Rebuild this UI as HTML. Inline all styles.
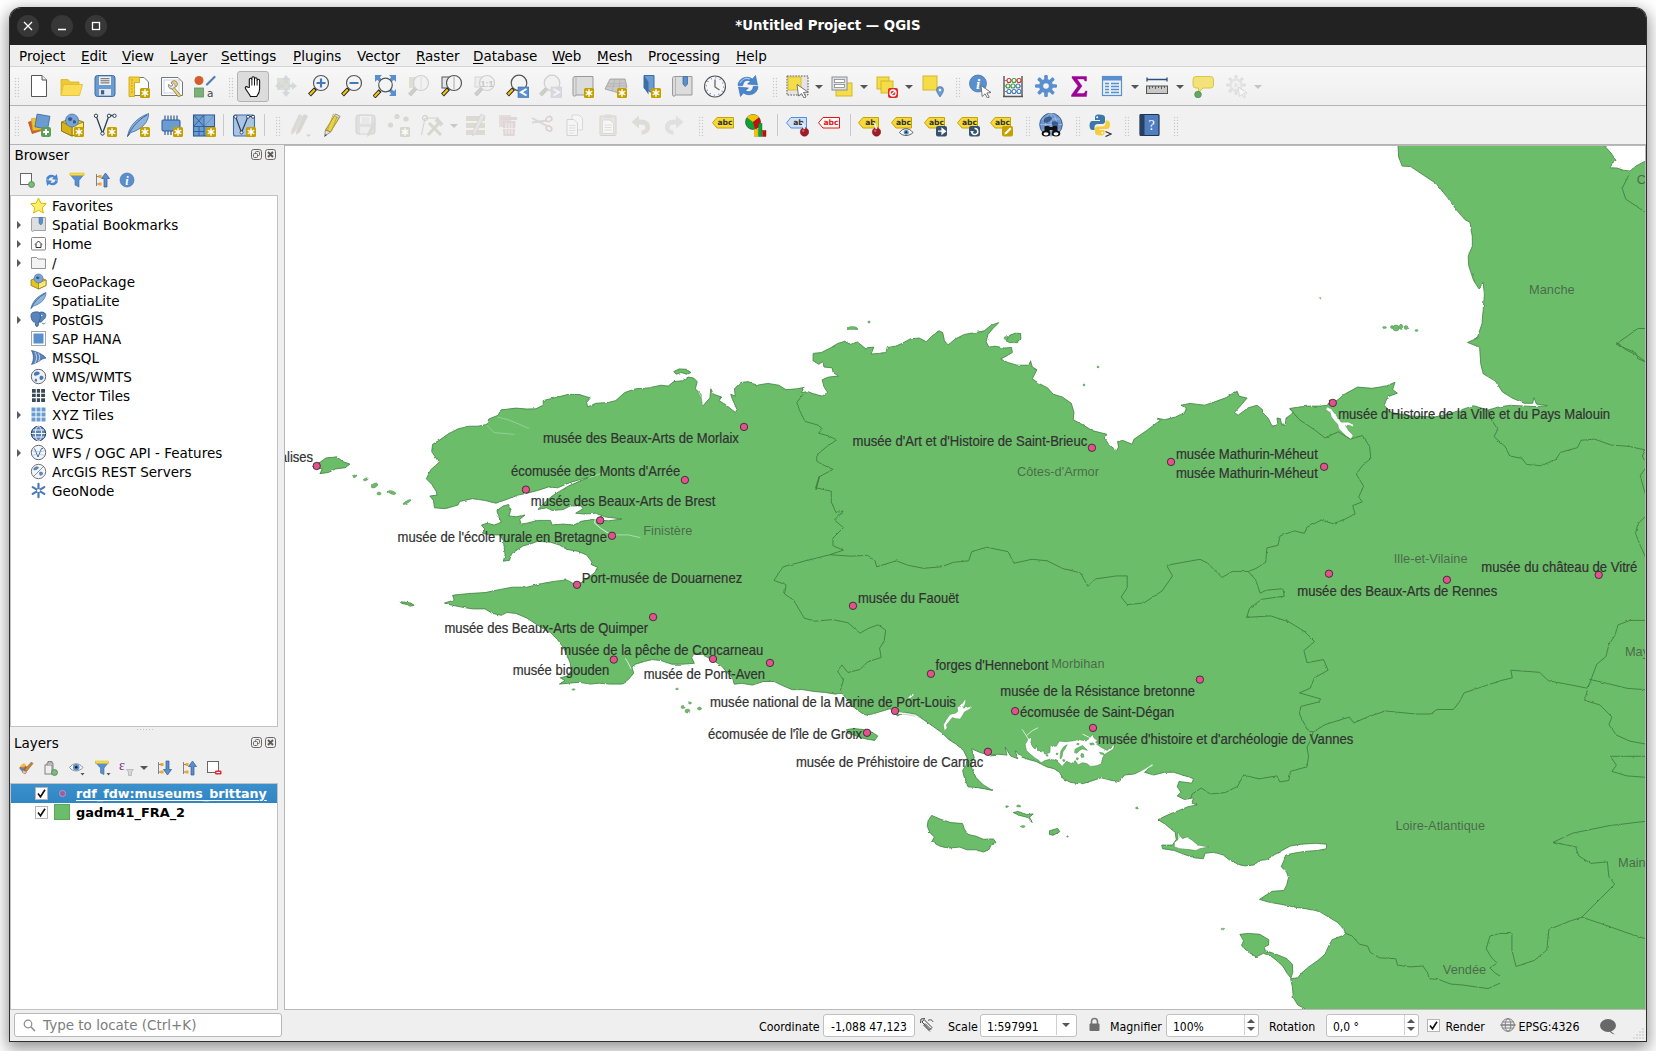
<!DOCTYPE html>
<html lang="en">
<head>
<meta charset="utf-8">
<title>*Untitled Project — QGIS</title>
<style>
html,body{margin:0;padding:0;}
body{width:1656px;height:1051px;overflow:hidden;background:#fff;position:relative;
 font-family:"DejaVu Sans","Liberation Sans",sans-serif;font-size:13.5px;color:#000;}
*{box-sizing:border-box;}
.abs{position:absolute;}
#shadow{position:absolute;left:9px;top:7px;width:1638px;height:1035px;border-radius:12px 12px 0 0;
 box-shadow:0 5px 16px 2px rgba(0,0,0,.42);}
#win{position:absolute;left:9px;top:7px;width:1638px;height:1035px;border-radius:12px 12px 0 0;
 background:#efefef;overflow:hidden;border:1px solid #2e2e2e;border-top-color:#222;}
#title{position:absolute;left:0;top:0;width:1636px;height:37px;background:#222222;}
#title .t{position:absolute;left:0;width:1636px;top:9px;text-align:center;color:#fff;font-weight:bold;font-size:13.35px;line-height:17px;}
.wb{position:absolute;top:7px;width:22px;height:22px;border-radius:50%;background:#373737;}
#menu{position:absolute;left:0;top:37px;width:1636px;height:22px;background:#efefef;border-bottom:1px solid #d4d4d4;}
#menu span{position:absolute;top:3px;line-height:17px;white-space:nowrap;}
#menu u{text-decoration:underline;text-underline-offset:2px;}
.tb{position:absolute;left:0;width:1636px;height:39px;background:linear-gradient(#f7f7f7,#efefef);border-bottom:1px solid #b4b4b4;}
.ic{position:absolute;width:24px;height:24px;}
.grip{position:absolute;width:6px;height:21px;background-image:radial-gradient(circle,#c8c8c8 0.6px,transparent 1.05px);background-size:3px 3px;}
.sep{position:absolute;width:1px;height:22px;background:#c8c8c8;}
.dd{position:absolute;width:0;height:0;border-left:4px solid transparent;border-right:4px solid transparent;border-top:4px solid #555;}
.dock-title{position:absolute;left:5px;font-size:13.5px;line-height:18px;}
.tree{position:absolute;background:#fff;border:1px solid #c2c2c2;}
.row{position:absolute;left:0;height:19px;line-height:19px;white-space:nowrap;}
.row .lbl{position:absolute;left:41px;top:0;}
.arrow{position:absolute;left:6px;top:5px;width:0;height:0;border-top:4px solid transparent;border-bottom:4px solid transparent;border-left:4.5px solid #5a5a5a;}
.bi{position:absolute;left:18.5px;top:0px;width:17px;height:17px;}
.fld{position:absolute;background:#fff;border:1px solid #c0c0c0;border-radius:3px;height:23px;padding-top:1px;line-height:22px;font-family:"DejaVu Sans Condensed","DejaVu Sans","Liberation Sans",sans-serif;font-stretch:condensed;font-size:12px;padding-left:6px;white-space:nowrap;}
.sl{position:absolute;font-family:"DejaVu Sans Condensed","DejaVu Sans","Liberation Sans",sans-serif;font-stretch:condensed;font-size:12.3px;line-height:16px;white-space:nowrap;}
</style>
</head>
<body>
<div id="shadow"></div>
<div id="win">
<div id="title">
 <div class="wb" style="left:7px"><svg width="22" height="22"><path d="M7 7L15 15M15 7L7 15" stroke="#fff" stroke-width="1.3" fill="none"/></svg></div>
 <div class="wb" style="left:41px"><svg width="22" height="22"><path d="M7 14.5H15" stroke="#fff" stroke-width="1.3" fill="none"/></svg></div>
 <div class="wb" style="left:75px"><svg width="22" height="22"><rect x="7.5" y="7.5" width="7" height="7" stroke="#fff" stroke-width="1.3" fill="none"/></svg></div>
 <div class="t">*Untitled Project — QGIS</div>
</div>
<div id="menu">
 <span style="left:9px">Pro<u>j</u>ect</span>
 <span style="left:71px"><u>E</u>dit</span>
 <span style="left:112px"><u>V</u>iew</span>
 <span style="left:160px"><u>L</u>ayer</span>
 <span style="left:211px"><u>S</u>ettings</span>
 <span style="left:283px"><u>P</u>lugins</span>
 <span style="left:347px">Vect<u>o</u>r</span>
 <span style="left:406px"><u>R</u>aster</span>
 <span style="left:463px"><u>D</u>atabase</span>
 <span style="left:542px"><u>W</u>eb</span>
 <span style="left:587px"><u>M</u>esh</span>
 <span style="left:638px">Pro<u>c</u>essing</span>
 <span style="left:726px"><u>H</u>elp</span>
</div>
<div class="tb" style="top:59px">
<div class="grip" style="left:4px;top:10px"></div>
<svg class="ic" style="left:17px;top:7px" viewBox="0 0 24 24"><path d="M4.5 1.5H15L19.5 6V22.5H4.5Z" fill="#fff" stroke="#555" stroke-width="1"/><path d="M15 1.5V6H19.5" fill="#eee" stroke="#555" stroke-width="1"/></svg>
<svg class="ic" style="left:49px;top:7px" viewBox="0 0 24 24"><path d="M2 5.5H9L11 8H20V21H2Z" fill="#edc933" stroke="#d9b420" stroke-width="0.8"/><path d="M4.5 10.5H23.5L20.5 21.5H2Z" fill="#fbdc57" stroke="#e0bd30" stroke-width="0.8"/></svg>
<svg class="ic" style="left:83px;top:7px" viewBox="0 0 24 24"><rect x="2" y="1.5" width="20" height="21" rx="2.5" fill="#6a9bd1" stroke="#3d6da3" stroke-width="1"/><rect x="6" y="2.5" width="12" height="8.5" fill="#f2f2f2"/><path d="M7.5 4.7H16.5M7.5 6.8H16.5M7.5 8.9H16.5" stroke="#555" stroke-width="0.9"/><rect x="6" y="15" width="12" height="6.5" fill="#e4e9f0"/><rect x="8" y="16.2" width="3.2" height="4.2" fill="#3d5f8f"/></svg>
<svg class="ic" style="left:116px;top:7px" viewBox="0 0 24 24"><path d="M3.5 3.5H18L22.500 8V21.5H3.5Z" fill="#fff" stroke="#777" stroke-width="1"/><path d="M3 3H13.5V8.500H8.500V22.500H3Z" fill="#f3cf3d" stroke="#c9a400" stroke-width="0.8"/><path d="M5 6H7M5 9H6.5M5 12H7M5 15H6.5M5 18H7" stroke="#a88600" stroke-width="0.7"/><rect x="14" y="14" width="10" height="10" rx="1.5" fill="#c4a000"/><g stroke="#fff" stroke-width="1.4" stroke-linecap="round"><path d="M19 15.8V22.2M16.2 17.4L21.8 20.6M21.8 17.4L16.2 20.6"/></g></svg>
<svg class="ic" style="left:149px;top:7px" viewBox="0 0 24 24"><path d="M2.5 3.5H19L23.500 8V21.5H2.5Z" fill="#fff" stroke="#777" stroke-width="1"/><rect x="5" y="6" width="15" height="13" fill="none" stroke="#b9c5ea" stroke-width="0.8"/><path d="M12 9a3.300 3.300 0 1 1 3 4.300L22 21.500L19.500 23L13 15a3.500 3.500 0 0 1-3.500-4.500L12 12.500L14 11Z" fill="#e9d08a" stroke="#8d7a3a" stroke-width="0.8"/><path d="M12 9a3.300 3.300 0 0 1 4.200 4L13.500 14.500a3.500 3.500 0 0 1-4-4L12 12.500L14 11Z" fill="#e8e8e8" stroke="#888" stroke-width="0.7"/></svg>
<svg class="ic" style="left:182px;top:7px" viewBox="0 0 24 24"><circle cx="7" cy="6.5" r="4.5" fill="#d35e2f"/><rect x="2.500" y="14" width="9" height="9" fill="#7bb07b" stroke="#5d945d" stroke-width="0.8"/><path d="M15 10.500L22.500 3" stroke="#4d7fb8" stroke-width="2.200" stroke-linecap="round"/><text x="15" y="22.500" font-family="DejaVu Sans,Liberation Sans,sans-serif" font-size="10.500" fill="#444">a</text></svg>
<div class="grip" style="left:218px;top:10px"></div>
<div class="abs" style="left:227px;top:4px;width:32px;height:31px;border:1px solid #b3b3b3;border-radius:3px;background:#dcdcdc"></div>
<svg class="ic" style="left:231px;top:7px" viewBox="0 0 24 24"><path d="M8.300 13.500V5.500a1.300 1.300 0 0 1 2.600 0V4a1.300 1.300 0 0 1 2.600 0V5a1.300 1.300 0 0 1 2.600 0V6.500a1.250 1.250 0 0 1 2.500 0V15c0 4-2 6-3 7.500H9.500C8.500 20 6 17.500 4.500 14.500c-.8-1.600 1-2.600 2.200-1.300Z" fill="#fff" stroke="#111" stroke-width="1.100" stroke-linejoin="round"/><path d="M10.900 5.500V11.500M13.500 5V11.500M16.100 6.500V11.500" stroke="#111" stroke-width="1"/></svg>
<svg class="ic" style="left:264px;top:7px" viewBox="0 0 24 24"><rect x="3" y="4" width="13" height="12" fill="#deded2"/><g fill="#d3d8dc"><path d="M12 1L16 6H13.500V10H10.500V6H8Z"/><path d="M12 23L16 18H13.500V14H10.500V18H8Z"/><path d="M1 12L6 8V10.500H10V13.500H6V16Z"/><path d="M23 12L18 8V10.500H14V13.500H18V16Z"/></g></svg>
<svg class="ic" style="left:297px;top:7px" viewBox="0 0 24 24"><path d="M8.6 14.6L2.5 21" stroke="#222" stroke-width="4" stroke-linecap="butt"/><path d="M7.7 15.5L3 20.5" stroke="#f3c614" stroke-width="2.2"/><circle cx="14" cy="9" r="7.5" fill="#f4f4f4" stroke="#555" stroke-width="1.2"/><path d="M9.500 9H18.500M14 4.500V13.500" stroke="#4178be" stroke-width="2.200"/></svg>
<svg class="ic" style="left:330px;top:7px" viewBox="0 0 24 24"><path d="M8.6 14.6L2.5 21" stroke="#222" stroke-width="4" stroke-linecap="butt"/><path d="M7.7 15.5L3 20.5" stroke="#f3c614" stroke-width="2.2"/><circle cx="14" cy="9" r="7.5" fill="#f4f4f4" stroke="#555" stroke-width="1.2"/><path d="M9.500 9H18.500" stroke="#4178be" stroke-width="2.200"/></svg>
<svg class="ic" style="left:363px;top:7px" viewBox="0 0 24 24"><g fill="#5a8fce"><path d="M2 1H9L6.800 3.200L10 6.500L7.500 9L4.200 5.800L2 8Z"/><path d="M23 1V8L20.800 5.800L17.500 9L15 6.500L18.200 3.200L16 1Z"/><path d="M23 22H16L18.200 19.800L15 16.500L17.500 14L20.800 17.200L23 15Z"/></g><path d="M7.1 16.6L1.0 23" stroke="#222" stroke-width="4" stroke-linecap="butt"/><path d="M6.2 17.5L1.5 22.5" stroke="#f3c614" stroke-width="2.2"/><circle cx="12.5" cy="11" r="6.8" fill="#f4f4f4" stroke="#555" stroke-width="1.2"/></svg>
<svg class="ic" style="left:396px;top:7px" viewBox="0 0 24 24"><rect x="3" y="3" width="11" height="11" fill="#deded2"/><path d="M9.6 14.6L3.5 21" stroke="#c8c8c8" stroke-width="4" stroke-linecap="butt"/><path d="M8.7 15.5L4 20.5" stroke="#cfcfc4" stroke-width="2.2"/><circle cx="15" cy="9" r="7.5" fill="#f1f1f1" stroke="#cfcfcf" stroke-width="1.2"/><path d="M15 3V15" stroke="#dcdcdc" stroke-width="1"/></svg>
<svg class="ic" style="left:429px;top:7px" viewBox="0 0 24 24"><rect x="3" y="3" width="11" height="11" fill="#e4e4e4" stroke="#555" stroke-width="1"/><path d="M9.6 14.6L3.5 21" stroke="#222" stroke-width="4" stroke-linecap="butt"/><path d="M8.7 15.5L4 20.5" stroke="#f3c614" stroke-width="2.2"/><circle cx="15" cy="9" r="7.5" fill="#f4f4f4" stroke="#555" stroke-width="1.2"/><path d="M15 2.500V15.500" stroke="#aaa" stroke-width="1"/></svg>
<svg class="ic" style="left:462px;top:7px" viewBox="0 0 24 24"><rect x="3" y="3" width="10" height="10" fill="#ededed" stroke="#d5d5d5"/><path d="M9.6 14.6L3.5 21" stroke="#c8c8c8" stroke-width="4" stroke-linecap="butt"/><path d="M8.7 15.5L4 20.5" stroke="#cfcfc4" stroke-width="2.2"/><circle cx="15" cy="9" r="7.5" fill="#f1f1f1" stroke="#cfcfcf" stroke-width="1.2"/><text x="15" y="12.500" text-anchor="middle" font-family="Liberation Sans,sans-serif" font-weight="bold" font-size="9" fill="#c6c6c6">1:1</text></svg>
<svg class="ic" style="left:495px;top:7px" viewBox="0 0 24 24"><path d="M8.6 14.6L2.5 21" stroke="#222" stroke-width="4" stroke-linecap="butt"/><path d="M7.7 15.5L3 20.5" stroke="#f3c614" stroke-width="2.2"/><circle cx="14" cy="9" r="7.8" fill="#f4f4f4" stroke="#555" stroke-width="1.2"/><rect x="13" y="13" width="11" height="10.500" fill="#5a8fce" stroke="#3d6da3" stroke-width="0.600"/><path d="M21.500 15L16 18.200L21.500 21.500" stroke="#fff" stroke-width="2" fill="none"/></svg>
<svg class="ic" style="left:528px;top:7px" viewBox="0 0 24 24"><path d="M8.6 14.6L2.5 21" stroke="#c8c8c8" stroke-width="4" stroke-linecap="butt"/><path d="M7.7 15.5L3 20.5" stroke="#cfcfc4" stroke-width="2.2"/><circle cx="14" cy="9" r="7.8" fill="#f1f1f1" stroke="#cfcfcf" stroke-width="1.2"/><rect x="13" y="13" width="11" height="10.500" fill="#d6dade" stroke="#cfd3d6" stroke-width="0.600"/><path d="M15.500 15L21 18.200L15.500 21.500" stroke="#f4f4f4" stroke-width="2" fill="none"/></svg>
<svg class="ic" style="left:561px;top:7px" viewBox="0 0 24 24"><path d="M4 2.500C2.500 2.500 2 3.500 2 4.500V21c0 1.500 3 1.500 3 0H22V2.500Z" fill="#dcdcdc" stroke="#999" stroke-width="1"/><path d="M5 2.500V21" stroke="#aaa" stroke-width="0.800"/><rect x="13" y="14" width="10" height="10" rx="1.5" fill="#c4a000"/><g stroke="#fff" stroke-width="1.4" stroke-linecap="round"><path d="M18 15.8V22.2M15.2 17.4L20.8 20.6M20.8 17.4L15.2 20.6"/></g></svg>
<svg class="ic" style="left:594px;top:7px" viewBox="0 0 24 24"><path d="M6 5H21L23 13L15 19L1 15Z" fill="#c9c9c9" stroke="#9a9a9a" stroke-width="0.800"/><path d="M4 10L22 9M3 12.500L22.500 11.500M11 5L8 17M16 5L15 18" stroke="#aaa" stroke-width="0.600"/><rect x="13" y="14" width="10" height="10" rx="1.5" fill="#c4a000"/><g stroke="#fff" stroke-width="1.4" stroke-linecap="round"><path d="M18 15.8V22.2M15.2 17.4L20.8 20.6M20.8 17.4L15.2 20.6"/></g></svg>
<svg class="ic" style="left:628px;top:7px" viewBox="0 0 24 24"><path d="M6 1.500H16V20L6 14Z" fill="#6a9bd1" stroke="#3d6da3" stroke-width="1"/><path d="M6 1.500V14L10.500 20.500V8Z" fill="#3d6da3"/><rect x="13" y="14" width="10" height="10" rx="1.5" fill="#c4a000"/><g stroke="#fff" stroke-width="1.4" stroke-linecap="round"><path d="M18 15.8V22.2M15.2 17.4L20.8 20.6M20.8 17.4L15.2 20.6"/></g></svg>
<svg class="ic" style="left:660px;top:7px" viewBox="0 0 24 24"><path d="M4.500 2.500C3 2.500 2.500 3.500 2.500 4.500V21c0 1.500 3 1.500 3 0H22V2.500Z" fill="#dcdcdc" stroke="#999" stroke-width="1"/><path d="M5.500 2.500V21" stroke="#aaa" stroke-width="0.800"/><path d="M13 2.500H17.500V10L15.200 12.500L13 10Z" fill="#5a8fce" stroke="#3d6da3" stroke-width="0.800"/></svg>
<svg class="ic" style="left:693px;top:7px" viewBox="0 0 24 24"><circle cx="12" cy="12.500" r="10.500" fill="#f6f6f6" stroke="#555" stroke-width="1.100"/><circle cx="12" cy="12.500" r="8.600" fill="none" stroke="#5a8fce" stroke-width="1.200" stroke-dasharray="1.100 3.400"/><path d="M12 5.500V13L16.500 16" stroke="#666" stroke-width="1.300" fill="none"/></svg>
<svg class="ic" style="left:726px;top:7px" viewBox="0 0 24 24"><path d="M2 11.500C2.200 4.500 10.500 0.800 16.500 5L19.500 1.500L21.500 11L11.500 10L14.500 7.200C11 5.200 7 7 6.800 11.500Z" fill="#4a86cf" stroke="#356bb0" stroke-width="0.600"/><path d="M22 12.500C21.800 19.500 13.500 23.200 7.500 19L4.500 22.500L2.500 13L12.500 14L9.500 16.800C13 18.800 17 17 17.200 12.500Z" fill="#4a86cf" stroke="#356bb0" stroke-width="0.600"/><path d="M4 9C6 5 10 3.500 14 5" stroke="#a9c8ee" stroke-width="1.200" fill="none"/></svg>
<div class="grip" style="left:762px;top:10px"></div>
<svg class="ic" style="left:775px;top:7px" viewBox="0 0 24 24"><rect x="2" y="2" width="21" height="19" fill="#e4e4e4" stroke="#333" stroke-width="0.800" stroke-dasharray="1.600 1.200"/><rect x="3" y="3" width="13" height="13" fill="#f5dc4a" stroke="#d3b820" stroke-width="0.800"/><path d="M12 10.500L23 18L18.500 18.500L21 23L19 24L16.500 19.500L13.500 22Z" fill="#fff" stroke="#666" stroke-width="0.900"/></svg>
<div class="dd" style="left:805px;top:18px;border-top-color:#555"></div>
<svg class="ic" style="left:820px;top:7px" viewBox="0 0 24 24"><rect x="6" y="9" width="16" height="13" fill="#f5dc4a" stroke="#d3b820" stroke-width="1"/><rect x="2" y="3" width="15" height="13" fill="#dfe3e8" stroke="#8a8f96" stroke-width="1"/><rect x="4.500" y="5.500" width="10" height="3" fill="#fff" stroke="#888" stroke-width="0.800"/><rect x="4.500" y="10.500" width="10" height="3" fill="#fff" stroke="#888" stroke-width="0.800"/></svg>
<div class="dd" style="left:850px;top:18px;border-top-color:#555"></div>
<svg class="ic" style="left:865px;top:7px" viewBox="0 0 24 24"><rect x="2" y="3" width="12" height="12" fill="#f5dc4a" stroke="#d3b820" stroke-width="1"/><rect x="6" y="7" width="12" height="12" fill="#f5dc4a" stroke="#d3b820" stroke-width="1"/><rect x="13" y="14" width="10" height="10" rx="2" fill="#e02a2a"/><circle cx="18" cy="19" r="3" fill="none" stroke="#fff" stroke-width="1.300"/><path d="M16 21L20 17" stroke="#fff" stroke-width="1.300"/></svg>
<div class="dd" style="left:895px;top:18px;border-top-color:#555"></div>
<svg class="ic" style="left:911px;top:7px" viewBox="0 0 24 24"><rect x="2" y="2" width="14" height="14" fill="#f5dc4a" stroke="#d3b820" stroke-width="1"/><path d="M19 12.500a3.500 3.500 0 0 1 3.500 3.500c0 2.500-3.500 7-3.500 7s-3.500-4.500-3.500-7a3.500 3.500 0 0 1 3.500-3.500Z" fill="#6a9bd1" stroke="#3d6da3" stroke-width="0.600"/><circle cx="19" cy="16" r="1.300" fill="#fff"/></svg>
<div class="grip" style="left:945px;top:10px"></div>
<svg class="ic" style="left:958px;top:7px" viewBox="0 0 24 24"><circle cx="10" cy="9.500" r="8.500" fill="#5a8fce" stroke="#3d6da3" stroke-width="0.700"/><text x="10" y="15" text-anchor="middle" font-family="Liberation Serif,serif" font-style="italic" font-weight="bold" font-size="15" fill="#fff">i</text><path d="M13 11.500L23 18.500L18.800 19L21.200 23.200L19.500 24L17 19.800L14.200 22.500Z" fill="#fff" stroke="#666" stroke-width="0.900"/></svg>
<svg class="ic" style="left:991px;top:7px" viewBox="0 0 24 24"><path d="M3 2V22M21 2V22M2 22.500H22" stroke="#555" stroke-width="1.400" fill="none"/><path d="M3 6.500H21M3 12H21M3 17.500H21" stroke="#777" stroke-width="0.900"/><g fill="#fff" stroke-width="1.100"><circle cx="8" cy="6.500" r="2" stroke="#d03030"/><circle cx="13" cy="6.500" r="2" stroke="#3a9a3a"/><circle cx="18" cy="6.500" r="2" stroke="#d03030"/><circle cx="7" cy="12" r="2" stroke="#3a9a3a"/><circle cx="12" cy="12" r="2" stroke="#3a9a3a"/><circle cx="17" cy="12" r="2" stroke="#4178be"/><circle cx="8" cy="17.500" r="2" stroke="#4178be"/><circle cx="13" cy="17.500" r="2" stroke="#4178be"/><circle cx="18" cy="17.500" r="2" stroke="#4178be"/></g></svg>
<svg class="ic" style="left:1024px;top:7px" viewBox="0 0 24 24"><g transform="translate(12,12)"><g fill="#5a8fce"><rect x="-1.800" y="-11" width="3.600" height="22" rx="1.200"/><rect x="-1.800" y="-11" width="3.600" height="22" rx="1.200" transform="rotate(45)"/><rect x="-1.800" y="-11" width="3.600" height="22" rx="1.200" transform="rotate(90)"/><rect x="-1.800" y="-11" width="3.600" height="22" rx="1.200" transform="rotate(135)"/></g><circle r="7" fill="#5a8fce"/><circle r="2.800" fill="#f3f3f3"/></g></svg>
<svg class="ic" style="left:1057px;top:7px" viewBox="0 0 24 24"><path d="M5 2.500H19.500V7H17.800C17.600 5.500 17 5 15.500 5H10L15 12L9.500 19.500H16C17.500 19.500 18.200 18.500 18.500 17H20L19.500 22.500H4.500V21L11 12L5 4Z" fill="#a0009a" stroke="#86007f" stroke-width="0.400"/></svg>
<svg class="ic" style="left:1090px;top:7px" viewBox="0 0 24 24"><rect x="2.500" y="2.500" width="19" height="19" fill="#eaf0f8" stroke="#5a8fce" stroke-width="1.200"/><rect x="2.500" y="2.500" width="19" height="4" fill="#5a8fce"/><path d="M5 9.500H9M11 9.500H19M5 12.500H9M11 12.500H19M5 15.500H9M11 15.500H19M5 18.500H9M11 18.500H19" stroke="#5a8fce" stroke-width="1.400"/></svg>
<div class="dd" style="left:1121px;top:18px;border-top-color:#555"></div>
<svg class="ic" style="left:1135px;top:7px" viewBox="0 0 24 24"><path d="M2 5.500H22M2 3.500V7.500M22 3.500V7.500" stroke="#2d4f7c" stroke-width="1.300" fill="none"/><rect x="1.500" y="12" width="21" height="7.500" fill="#c8c8c8" stroke="#555" stroke-width="1"/><path d="M4.500 12V15M7.500 12V14M10.500 12V15M13.500 12V14M16.500 12V15M19.500 12V14" stroke="#555" stroke-width="0.900"/></svg>
<div class="dd" style="left:1166px;top:18px;border-top-color:#555"></div>
<svg class="ic" style="left:1181px;top:7px" viewBox="0 0 24 24"><path d="M5 2.500H19.500a3 3 0 0 1 3 3v5.500a3 3 0 0 1-3 3H12L7.500 18.500V14H5a3 3 0 0 1-3-3V5.500a3 3 0 0 1 3-3Z" fill="#f3e27a" stroke="#d7bf3a" stroke-width="0.900"/><circle cx="7" cy="20.500" r="3.300" fill="#64a764" stroke="#4a8a4a" stroke-width="0.700"/></svg>
<svg class="ic" style="left:1215px;top:7px" viewBox="0 0 24 24"><g opacity=".45" transform="translate(11,11)"><g fill="#c9c9c9"><rect x="-1.600" y="-10" width="3.200" height="20" rx="1"/><rect x="-1.600" y="-10" width="3.200" height="20" rx="1" transform="rotate(45)"/><rect x="-1.600" y="-10" width="3.200" height="20" rx="1" transform="rotate(90)"/><rect x="-1.600" y="-10" width="3.200" height="20" rx="1" transform="rotate(135)"/></g><circle r="6.500" fill="#d2d2d2"/><circle r="4.300" fill="#f0f0f0"/><path d="M-1.500 -2.500L2.500 0L-1.500 2.500Z" fill="#d0d0d0"/></g><path d="M13 13L22 19L18.500 19.500L20.500 23L19 23.800L17 20.200L14.500 22.500Z" fill="#f8f8f8" stroke="#d0d0d0" stroke-width="0.800"/></svg>
<div class="dd" style="left:1244px;top:18px;border-top-color:#c4c4c4"></div>
</div>
<div class="tb" style="top:98px;background:#f1f1f1">
<div class="grip" style="left:4px;top:10px"></div>
<svg class="ic" style="left:17px;top:7px" viewBox="0 0 24 24"><rect x="3" y="7" width="12" height="12" fill="#d35e2f" stroke="#b0481f" stroke-width="0.600" transform="rotate(-18 9 13)"/><rect x="5" y="5" width="12" height="12" fill="#f0c030" stroke="#c9a000" stroke-width="0.600" transform="rotate(-6 11 11)"/><rect x="9" y="2" width="13" height="13" fill="#6a9bd1" stroke="#3d6da3" stroke-width="0.800" transform="rotate(10 15 8)"/><rect x="14" y="14" width="10" height="10" rx="2" fill="#5d9e5d"/><path d="M19 16V22M16 19H22" stroke="#fff" stroke-width="2"/></svg>
<svg class="ic" style="left:50px;top:7px" viewBox="0 0 24 24"><path d="M1.500 9L12 5L23.500 9V18L12 23L1.500 18Z" fill="#e8c41c" stroke="#7a6a10" stroke-width="0.800"/><path d="M12 13.500L23.500 9V18L12 23Z" fill="#fbe977" stroke="#7a6a10" stroke-width="0.700"/><path d="M1.500 9L12 13.500V23L1.500 18Z" fill="#d9b21a" stroke="#7a6a10" stroke-width="0.700"/><circle cx="12" cy="7.500" r="6.500" fill="#7aa3d4" stroke="#3d6da3" stroke-width="0.700"/><path d="M8 5c1.500-1 3-1 4 0s0 2.500-1.500 3S8 7 8 5ZM13 7.500c1.500-.5 3 0 3 1.500s-2 2-3 1Z" fill="#2f5a94"/><rect x="14" y="14" width="10" height="10" rx="1.5" fill="#c4a000"/><g stroke="#fff" stroke-width="1.4" stroke-linecap="round"><path d="M19 15.8V22.2M16.2 17.4L21.8 20.6M21.8 17.4L16.2 20.6"/></g></svg>
<svg class="ic" style="left:83px;top:7px" viewBox="0 0 24 24"><path d="M3 2.500L9.500 20.500L16 2.500H21" stroke="#2e4057" stroke-width="1.300" fill="none"/><g fill="#fff" stroke="#2e4057" stroke-width="1"><circle cx="3" cy="2.800" r="1.700"/><circle cx="16" cy="2.800" r="1.700"/><circle cx="21.500" cy="2.800" r="1.700"/><circle cx="9.500" cy="20.500" r="1.700"/></g><rect x="14" y="14" width="10" height="10" rx="1.5" fill="#c4a000"/><g stroke="#fff" stroke-width="1.4" stroke-linecap="round"><path d="M19 15.8V22.2M16.2 17.4L21.8 20.6M21.8 17.4L16.2 20.6"/></g></svg>
<svg class="ic" style="left:116px;top:7px" viewBox="0 0 24 24"><path d="M1.500 23.500C3 15 8 6 22.500 0.500C23 8 17 16 5 19.500Z" fill="#8fb3db" stroke="#3d6da3" stroke-width="0.800"/><path d="M1.500 23.500C6 14 12 7 21 2" stroke="#2f5a94" stroke-width="0.900" fill="none"/><rect x="14" y="14" width="10" height="10" rx="1.5" fill="#c4a000"/><g stroke="#fff" stroke-width="1.4" stroke-linecap="round"><path d="M19 15.8V22.2M16.2 17.4L21.8 20.6M21.8 17.4L16.2 20.6"/></g></svg>
<svg class="ic" style="left:149px;top:7px" viewBox="0 0 24 24"><rect x="3" y="7" width="18" height="11" rx="1" fill="#6a9bd1" stroke="#2f5a94" stroke-width="1"/><path d="M6 7V2.500M9 7V2.500M12 7V2.500M15 7V2.500M18 7V2.500M6 18V22M9 18V22M12 18V22" stroke="#2f5a94" stroke-width="1.200"/><rect x="14" y="14" width="10" height="10" rx="1.5" fill="#c4a000"/><g stroke="#fff" stroke-width="1.4" stroke-linecap="round"><path d="M19 15.8V22.2M16.2 17.4L21.8 20.6M21.8 17.4L16.2 20.6"/></g></svg>
<svg class="ic" style="left:182px;top:7px" viewBox="0 0 24 24"><rect x="1.500" y="2" width="21" height="21" fill="#6a9bd1" stroke="#2f5a94" stroke-width="1.100"/><path d="M1.500 13.500H22.500M12 2V23M1.500 2L12 13.500M12 2L1.500 13.500M12 13.500L22.500 2M7 13.500V23M1.500 18.500H12" stroke="#2f5a94" stroke-width="0.900" fill="none"/><rect x="12.500" y="2.500" width="9.500" height="10.500" fill="#8db3de" opacity=".6"/><rect x="14" y="14" width="10" height="10" rx="1.5" fill="#c4a000"/><g stroke="#fff" stroke-width="1.4" stroke-linecap="round"><path d="M19 15.8V22.2M16.2 17.4L21.8 20.6M21.8 17.4L16.2 20.6"/></g></svg>
<div class="sep" style="left:213px;top:8px"></div>
<svg class="ic" style="left:222px;top:7px" viewBox="0 0 24 24"><rect x="1.500" y="2" width="21" height="21" rx="2" fill="#a9c4e4" stroke="#3d6da3" stroke-width="1.100"/><path d="M3.500 3.500L9.500 19.500L16 3.500H21" stroke="#2e4057" stroke-width="1.200" fill="none"/><g fill="#fff" stroke="#2e4057" stroke-width="0.900"><circle cx="3.500" cy="3.800" r="1.500"/><circle cx="16" cy="3.800" r="1.500"/><circle cx="21" cy="3.800" r="1.500"/><circle cx="9.500" cy="19.500" r="1.500"/></g><rect x="14" y="14" width="10" height="10" rx="1.5" fill="#c4a000"/><g stroke="#fff" stroke-width="1.4" stroke-linecap="round"><path d="M19 15.8V22.2M16.2 17.4L21.8 20.6M21.8 17.4L16.2 20.6"/></g></svg>
<div class="sep" style="left:254px;top:8px"></div>
<div class="grip" style="left:265px;top:10px"></div>
<svg class="ic" style="left:278px;top:7px" viewBox="0 0 24 24"><g opacity=".75"><path d="M11 1L15 3L7 19L3 22L3.500 17Z" fill="#d4d2cc"/><path d="M16 1L20 3L12 19L8 22L8.500 17Z" fill="#cfcdc6"/><path d="M18 21.500H23L20.500 24Z" fill="#c8c8c8"/></g></svg>
<svg class="ic" style="left:311px;top:7px" viewBox="0 0 24 24"><path d="M14.500 1L19 3.500L9.500 19L4.500 17Z" fill="#e8d44a" stroke="#8a7a1a" stroke-width="0.800"/><path d="M16.500 2.200L10.500 18.200M12.500 0.800L6.500 17" stroke="#b9a52a" stroke-width="0.800"/><path d="M14.500 1L19 3.500L18 5.200L13.500 2.800Z" fill="#e0e0e0" stroke="#888" stroke-width="0.600"/><path d="M4.500 17L9.500 19L3.500 23.500Z" fill="#e9e0c8" stroke="#777" stroke-width="0.700"/><path d="M4.800 21L5.800 22L3.500 23.500Z" fill="#333"/></svg>
<svg class="ic" style="left:344px;top:7px" viewBox="0 0 24 24"><g opacity=".7"><rect x="2" y="2" width="19" height="19" rx="2.500" fill="#d9d9d9" stroke="#c4c4c4"/><rect x="6" y="3" width="11" height="7.500" fill="#f2f2f2"/><path d="M7.500 5H15.500M7.500 7H15.500M7.500 9H15.500" stroke="#cfcfcf" stroke-width="0.800"/><rect x="6" y="14" width="11" height="6.500" fill="#ececec"/><path d="M19 9L22 10.500L16 22L13 24L13.500 20.500Z" fill="#d2cfc6"/></g></svg>
<svg class="ic" style="left:377px;top:7px" viewBox="0 0 24 24"><g opacity=".75"><circle cx="10" cy="3.500" r="2.600" fill="#cfcfc8"/><circle cx="19" cy="6" r="2.600" fill="#cfcfc8"/><circle cx="3.500" cy="12" r="2.600" fill="#cfcfc8"/><rect x="13" y="14" width="10" height="10" rx="1.5" fill="#cfcdbf"/><g stroke="#fff" stroke-width="1.4" stroke-linecap="round"><path d="M18 15.8V22.2M15.2 17.4L20.8 20.6M20.8 17.4L15.2 20.6"/></g></g></svg>
<svg class="ic" style="left:410px;top:7px" viewBox="0 0 24 24"><g opacity=".75"><circle cx="5" cy="5" r="2.500" fill="none" stroke="#bbb" stroke-width="1"/><path d="M5 5H19M5 5L1.500 22" stroke="#c4c4c4" stroke-width="0.900" fill="none"/><path d="M9 10L21 22M19 10L8 22" stroke="#cfcdc0" stroke-width="3"/><path d="M16 6L22 12" stroke="#cfcdc0" stroke-width="4"/></g></svg>
<div class="dd" style="left:440px;top:18px;border-top-color:#c8c8c8"></div>
<svg class="ic" style="left:454px;top:7px" viewBox="0 0 24 24"><g opacity=".75"><rect x="2" y="3" width="19" height="5" fill="#d5d3c6"/><rect x="2" y="10" width="19" height="5" fill="#d5d3c6"/><rect x="2" y="17" width="19" height="5" fill="#d5d3c6"/><path d="M17 1L21 3L12 20L8.500 23L9 18.500Z" fill="#e1e1e1" stroke="#c4c4c4" stroke-width="0.700"/></g></svg>
<svg class="ic" style="left:487px;top:7px" viewBox="0 0 24 24"><g opacity=".75"><rect x="2" y="2" width="12" height="12" fill="#ded7d3"/><path d="M4 4H20V7H4Z" fill="#d9cdcb"/><path d="M5.500 8H18.500L17.500 23H6.500Z" fill="#d9cdcb"/><path d="M9 10V21M12 10V21M15 10V21M6 15.500H18" stroke="#f0eaea" stroke-width="1.200"/></g></svg>
<svg class="ic" style="left:520px;top:7px" viewBox="0 0 24 24"><g opacity=".75" fill="none"><path d="M2 5L17 13M2 9.500L17 7.500" stroke="#cfcfcf" stroke-width="1.800"/><ellipse cx="19" cy="6" rx="3" ry="2.400" stroke="#d4c4c4" stroke-width="1.500" transform="rotate(-25 19 6)"/><ellipse cx="19" cy="15.500" rx="3" ry="2.400" stroke="#d4c4c4" stroke-width="1.500" transform="rotate(35 19 15.500)"/></g></svg>
<svg class="ic" style="left:553px;top:7px" viewBox="0 0 24 24"><g opacity=".75"><path d="M9 2H16L19.500 5.500V17H9Z" fill="#f6f6f6" stroke="#ccc" stroke-width="0.900"/><path d="M4 6.500H11L14.500 10V22.500H4Z" fill="#f6f6f6" stroke="#c4c4c4" stroke-width="0.900"/><path d="M6 12.500H12.500M6 15H12.500M6 17.500H12.500M6 20H10.500" stroke="#cfcfcf" stroke-width="0.800"/></g></svg>
<svg class="ic" style="left:586px;top:7px" viewBox="0 0 24 24"><g opacity=".75"><rect x="4" y="3" width="16" height="19.500" rx="1" fill="#e6e2da" stroke="#c9c4ba" stroke-width="0.900"/><rect x="8.500" y="1.500" width="7" height="3.500" fill="#d6d6d6"/><path d="M6.500 7H14L17.500 10.500V20.500H6.500Z" fill="#f8f8f8" stroke="#ccc" stroke-width="0.800"/><path d="M8.500 12H15.500M8.500 14.500H15.500M8.500 17H15.500" stroke="#cfcfcf" stroke-width="0.800"/></g></svg>
<svg class="ic" style="left:619px;top:7px" viewBox="0 0 24 24"><path d="M2.500 9L10 2.500V6.500C17 6 21.500 9.500 21 15C20.500 19 17 21.500 12.500 21.500V17.500C15 17.500 16.500 16.500 16.500 14.500C16.500 12 14 11 10 11.500V15.500Z" fill="#d8d4ce" opacity=".75"/></svg>
<svg class="ic" style="left:652px;top:7px" viewBox="0 0 24 24"><path d="M21.500 9L14 2.500V6.500C7 6 2.500 9.500 3 15C3.500 19 7 21.500 11.500 21.500V17.500C9 17.500 7.500 16.500 7.500 14.500C7.500 12 10 11 14 11.500V15.500Z" fill="#dadada" opacity=".75"/></svg>
<div class="grip" style="left:688px;top:10px"></div>
<svg class="ic" style="left:701px;top:7px" viewBox="0 0 24 24"><path d="M1.5 9.75L6.0 4.5H22.5V15.0H6.0Z" fill="#f5d938" stroke="#c9a400" stroke-width="1"/><text x="14.0" y="12.4" text-anchor="middle" font-family="DejaVu Sans,Liberation Sans,sans-serif" font-weight="bold" font-size="7.600" fill="#333">abc</text></svg>
<svg class="ic" style="left:734px;top:7px" viewBox="0 0 24 24"><circle cx="9" cy="9" r="7.500" fill="#11a034" stroke="#222" stroke-width="0.500"/><path d="M9 9L3 4.500A7.500 7.500 0 0 1 15 4.500Z" fill="#f5c400"/><path d="M9 9L15 4.500A7.500 7.500 0 0 1 11 16.200Z" fill="#c01010"/><rect x="10.500" y="16" width="3.500" height="7.500" fill="#f5c400" stroke="#b08a00" stroke-width="0.400"/><rect x="14.500" y="10.500" width="3.500" height="13" fill="#11a034" stroke="#0a6a20" stroke-width="0.400"/><rect x="18.500" y="17.500" width="3.500" height="6" fill="#c01010" stroke="#800a0a" stroke-width="0.400"/></svg>
<div class="sep" style="left:767px;top:8px"></div>
<svg class="ic" style="left:775px;top:7px" viewBox="0 0 24 24"><path d="M1.5 9.75L6.0 4.5H21.5V15.0H6.0Z" fill="#cfe0f7" stroke="#4f8fe0" stroke-width="1"/><text x="13.5" y="12.4" text-anchor="middle" font-family="DejaVu Sans,Liberation Sans,sans-serif" font-weight="bold" font-size="7.600" fill="#333">ab</text><circle cx="19.500" cy="19" r="4.200" fill="#a01c28" stroke="#6e0f18" stroke-width="0.500"/><path d="M17.500 9.500L19.500 16" stroke="#eee" stroke-width="1.800"/><circle cx="18.200" cy="17.700" r="1.200" fill="#d0606a"/></svg>
<svg class="ic" style="left:807px;top:7px" viewBox="0 0 24 24"><path d="M1.5 9.75L6.0 4.5H22.5V15.0H6.0Z" fill="#fff" stroke="#ee1111" stroke-width="1"/><text x="14.0" y="12.4" text-anchor="middle" font-family="DejaVu Sans,Liberation Sans,sans-serif" font-weight="bold" font-size="7.600" fill="#ee1111">abc</text></svg>
<div class="sep" style="left:840px;top:8px"></div>
<svg class="ic" style="left:847px;top:7px" viewBox="0 0 24 24"><path d="M1.5 9.75L6.0 4.5H21.5V15.0H6.0Z" fill="#f5d938" stroke="#c9a400" stroke-width="1"/><text x="13.5" y="12.4" text-anchor="middle" font-family="DejaVu Sans,Liberation Sans,sans-serif" font-weight="bold" font-size="7.600" fill="#333">ab</text><circle cx="19.500" cy="19" r="4.200" fill="#a01c28" stroke="#6e0f18" stroke-width="0.500"/><path d="M17.500 9.500L19.500 16" stroke="#eee" stroke-width="1.800"/><circle cx="18.200" cy="17.700" r="1.200" fill="#d0606a"/></svg>
<svg class="ic" style="left:880px;top:7px" viewBox="0 0 24 24"><path d="M1.5 9.75L6.0 4.5H21.5V15.0H6.0Z" fill="#f5d938" stroke="#c9a400" stroke-width="1"/><text x="13.5" y="12.4" text-anchor="middle" font-family="DejaVu Sans,Liberation Sans,sans-serif" font-weight="bold" font-size="7.600" fill="#333">abc</text><path d="M9.500 19.500C13 14.500 19 14.500 23 19.500C19 23.500 13 23.500 9.500 19.500Z" fill="#fff" stroke="#333" stroke-width="0.800"/><circle cx="16.200" cy="19.200" r="2.500" fill="#5a8fce"/><circle cx="16.200" cy="19.200" r="1" fill="#123"/></svg>
<svg class="ic" style="left:913px;top:7px" viewBox="0 0 24 24"><path d="M1.5 9.75L6.0 4.5H21.5V15.0H6.0Z" fill="#f5d938" stroke="#c9a400" stroke-width="1"/><text x="13.5" y="12.4" text-anchor="middle" font-family="DejaVu Sans,Liberation Sans,sans-serif" font-weight="bold" font-size="7.600" fill="#333">abc</text><rect x="13" y="13" width="11" height="10.500" rx="2" fill="#35536e"/><path d="M15 18.200H19V15.500L22.500 18.200L19 21V18.200" fill="#fff" stroke="#fff" stroke-width="1.200"/></svg>
<svg class="ic" style="left:946px;top:7px" viewBox="0 0 24 24"><path d="M1.5 9.75L6.0 4.5H21.5V15.0H6.0Z" fill="#f5d938" stroke="#c9a400" stroke-width="1"/><text x="13.5" y="12.4" text-anchor="middle" font-family="DejaVu Sans,Liberation Sans,sans-serif" font-weight="bold" font-size="7.600" fill="#333">abc</text><rect x="13" y="13" width="11" height="10.500" rx="2" fill="#35536e"/><path d="M16 19.500A3 3 0 1 0 18.500 15.500" stroke="#fff" stroke-width="1.500" fill="none"/><path d="M14.200 18L16 21L18 18.200Z" fill="#fff"/></svg>
<svg class="ic" style="left:979px;top:7px" viewBox="0 0 24 24"><path d="M1.5 9.75L6.0 4.5H21.5V15.0H6.0Z" fill="#f5d938" stroke="#c9a400" stroke-width="1"/><text x="13.5" y="12.4" text-anchor="middle" font-family="DejaVu Sans,Liberation Sans,sans-serif" font-weight="bold" font-size="7.600" fill="#333">abc</text><rect x="13" y="13" width="11" height="10.500" rx="2" fill="#c4a000"/><path d="M15.500 21.500L16 19.500L21 14.500L22.500 16L17.500 21Z" fill="#fff"/></svg>
<div class="grip" style="left:1015px;top:10px"></div>
<svg class="ic" style="left:1029px;top:7px" viewBox="0 0 24 24"><circle cx="12" cy="11.500" r="11.300" fill="#6d95cc" stroke="#2f4f80" stroke-width="0.800"/><path d="M1 11.500H23M3 6H21M3 17H21M12 0.500V23" stroke="#c9d8ee" stroke-width="0.500" fill="none"/><ellipse cx="12" cy="11.500" rx="5.500" ry="11.300" fill="none" stroke="#c9d8ee" stroke-width="0.500"/><path d="M5 6c2-2 5-3 7-2s1 3-1 4-4 3-6 1ZM13 9c2-1 5-1 6 1s-1 4-3 4-4-3-3-5ZM8 13c1 0 3 1 3 3s-2 2-3 1-1-3 0-4Z" fill="#2f4f80" opacity=".85"/><g fill="#111"><rect x="5.500" y="13" width="5" height="7" rx="1"/><rect x="13.500" y="13" width="5" height="7" rx="1"/><rect x="10" y="14" width="4" height="3"/><ellipse cx="7" cy="20.500" rx="4.300" ry="3"/><ellipse cx="17" cy="20.500" rx="4.300" ry="3"/></g><ellipse cx="7" cy="20.800" rx="2.500" ry="1.600" fill="#fff"/><ellipse cx="17" cy="20.800" rx="2.500" ry="1.600" fill="#fff"/></svg>
<div class="grip" style="left:1065px;top:10px"></div>
<svg class="ic" style="left:1078px;top:7px" viewBox="0 0 24 24"><path d="M11 1.500C7.500 1.500 7 3 7 4.500V7H12V8H4.500C2.500 8 1.500 10 1.500 12.500S2.500 17 4.500 17H6.500V14C6.500 12 8 11 10 11H14.500C16 11 17 10 17 8.500V4.500C17 2.500 15 1.500 11 1.500Z" fill="#3b77a8"/><circle cx="9.200" cy="4.200" r="1" fill="#fff"/><path d="M12.500 22.500C16 22.500 16.500 21 16.500 19.500V17H11.500V16H19C21 16 22 14 22 11.500S21 7.500 19 7.500H17.500V10.500C17.500 12.500 16 13.500 14 13.500H9.500C8 13.500 7 14.500 7 16V19.500C7 21.500 9 22.500 12.500 22.500Z" fill="#f6cd3c"/><circle cx="14.300" cy="19.800" r="1" fill="#fff"/><path d="M17.500 18.500L23 21L17.500 23.500" stroke="#333" stroke-width="1.300" fill="none"/></svg>
<div class="grip" style="left:1114px;top:10px"></div>
<svg class="ic" style="left:1127px;top:7px" viewBox="0 0 24 24"><rect x="3" y="1.500" width="19" height="21" rx="1" fill="#4f7fc0" stroke="#1e3350" stroke-width="1.200"/><rect x="3" y="1.500" width="4.500" height="21" fill="#2a4060"/><text x="14.500" y="17" text-anchor="middle" font-family="Liberation Serif,serif" font-size="14" fill="#fff">?</text></svg>
<div class="grip" style="left:1163px;top:10px"></div>
</div>
<div class="dock-title" style="left:4.5px;top:138px">Browser</div>
<svg class="abs" style="left:241px;top:141px" width="26" height="12" viewBox="0 0 26 12"><rect x="0.500" y="0.500" width="10" height="10" rx="2.200" fill="none" stroke="#6b6763" stroke-width="1"/><rect x="4.500" y="2.500" width="4" height="4" rx="1" fill="none" stroke="#6b6763" stroke-width="1"/><rect x="2.500" y="4.500" width="4" height="4" rx="1" fill="#efefef" stroke="#6b6763" stroke-width="1"/><rect x="14.500" y="0.500" width="10" height="10" rx="2.200" fill="none" stroke="#6b6763" stroke-width="1"/><path d="M17 3L22 8M22 3L17 8" stroke="#5e5a55" stroke-width="1.900"/></svg>
<svg class="abs" style="left:8.5px;top:163.5px" width="16" height="16" viewBox="0 0 16 16"><rect x="1.500" y="1.500" width="11" height="11" fill="#fff" stroke="#666" stroke-width="1"/><circle cx="12.500" cy="12.500" r="3" fill="#7db97d" stroke="#4a8a4a" stroke-width="0.800"/></svg>
<svg class="abs" style="left:33.5px;top:163.5px" width="16" height="16" viewBox="0 0 16 16"><path d="M2 7.500C2.500 3 7.500 1.500 11 4L12.800 2L14 8L8 7.200L9.600 5.600C7.500 4.500 5 5.500 4.800 7.800Z" fill="#4a86cf"/><path d="M14 8.500C13.500 13 8.500 14.500 5 12L3.200 14L2 8L8 8.800L6.400 10.400C8.500 11.500 11 10.500 11.200 8.200Z" fill="#4a86cf"/></svg>
<svg class="abs" style="left:58.5px;top:163.5px" width="16" height="16" viewBox="0 0 16 16"><path d="M1 2.500H15L10 8.500V15L6 13V8.500Z" fill="#5a8fce" stroke="#3d6da3" stroke-width="0.600"/><rect x="1" y="1" width="14" height="2.500" fill="#f5dc4a" stroke="#d3b820" stroke-width="0.500"/></svg>
<svg class="abs" style="left:83.5px;top:163.5px" width="16" height="16" viewBox="0 0 16 16"><path d="M2.500 2V14M2.500 4.500H5M2.500 12H5" stroke="#777" stroke-width="0.900" fill="none"/><rect x="4.500" y="3" width="3" height="3" fill="#f5a623"/><rect x="4.500" y="10.500" width="3" height="3" fill="#f5a623"/><path d="M11.500 1L15.500 6.500H13V15H10V6.500H7.500Z" fill="#5a8fce" stroke="#2f5a94" stroke-width="0.700"/></svg>
<svg class="abs" style="left:108.5px;top:163.5px" width="16" height="16" viewBox="0 0 16 16"><circle cx="8" cy="8" r="7" fill="#5a8fce" stroke="#3d6da3" stroke-width="0.600"/><text x="8" y="12.500" text-anchor="middle" font-family="Liberation Serif,serif" font-style="italic" font-weight="bold" font-size="12" fill="#fff">i</text></svg>
<div class="tree" style="left:0px;top:187px;width:268px;height:532px">
<div class="row" style="top:1px"><svg class="bi" viewBox="0 0 17 17"><path d="M8.500 1L10.800 6.200L16.300 6.800L12.200 10.600L13.400 16L8.500 13.200L3.600 16L4.800 10.600L0.700 6.800L6.200 6.200Z" fill="#fdf06a" stroke="#d9b900" stroke-width="1"/></svg><span class="lbl">Favorites</span></div>
<div class="row" style="top:20px"><div class="arrow"></div><svg class="bi" viewBox="0 0 17 17"><path d="M3 1.500C1.800 1.500 1.500 2.300 1.500 3V14.500c0 1.200 2.300 1.200 2.300 0H15.500V1.500Z" fill="#dedede" stroke="#999" stroke-width="0.900"/><path d="M9 1.500H12.500V7L10.700 9L9 7Z" fill="#5a8fce" stroke="#3d6da3" stroke-width="0.600"/></svg><span class="lbl">Spatial Bookmarks</span></div>
<div class="row" style="top:39px"><div class="arrow"></div><svg class="bi" viewBox="0 0 17 17"><rect x="1.500" y="2.500" width="14" height="12.500" rx="1" fill="#fafafa" stroke="#777" stroke-width="0.900"/><path d="M5 9.500L8.500 6L12 9.500M6 9V12.500H11V9" stroke="#333" stroke-width="1" fill="none"/></svg><span class="lbl">Home</span></div>
<div class="row" style="top:58px"><div class="arrow"></div><svg class="bi" viewBox="0 0 17 17"><path d="M1.500 3.500H6.500L8 5H15.500V14.500H1.500Z" fill="#f3f3f3" stroke="#888" stroke-width="0.900"/></svg><span class="lbl">/</span></div>
<div class="row" style="top:77px"><svg class="bi" viewBox="0 0 17 17"><path d="M1 7L8.500 4L16 7V12.500L8.500 16L1 12.500Z" fill="#e8c41c" stroke="#7a6a10" stroke-width="0.700"/><path d="M8.500 10V16L16 12.500V7Z" fill="#fbe977" stroke="#7a6a10" stroke-width="0.600"/><circle cx="8.500" cy="5.500" r="4.500" fill="#7aa3d4" stroke="#3d6da3" stroke-width="0.600"/><path d="M6 4c1-.8 2-.8 3 0s0 1.800-1 2S6 5.500 6 4Z" fill="#2f5a94"/></svg><span class="lbl">GeoPackage</span></div>
<div class="row" style="top:96px"><svg class="bi" viewBox="0 0 17 17"><path d="M1 16.500C2 11 6 4.500 16 0.500C16 6 12 11.500 3.500 14Z" fill="#8fb3db" stroke="#3d6da3" stroke-width="0.700"/><path d="M1 16.500C4 10 8.500 5 15 1.500" stroke="#2f5a94" stroke-width="0.800" fill="none"/></svg><span class="lbl">SpatiaLite</span></div>
<div class="row" style="top:115px"><div class="arrow"></div><svg class="bi" viewBox="0 0 17 17"><path d="M3 1.500C0.500 2 0.500 6 2 9c1 2 2 2.500 3 1.500L5.500 14c.2 2 2.500 2 2.800 0L8.500 11c2 .5 3.500 0 4-1.500C15 8 16.500 5 15.500 3 14.500 1 11 0.500 9.500 1.500 7.500 0.500 5 0.800 3 1.500Z" fill="#5b84b8" stroke="#2f5a94" stroke-width="0.800"/><path d="M9.500 2C11 4 10.500 8 9 10.500M12 12c1 1 2.500 1 3.500 0" stroke="#2f5a94" stroke-width="0.800" fill="none"/><circle cx="11.800" cy="4.500" r="0.700" fill="#fff"/></svg><span class="lbl">PostGIS</span></div>
<div class="row" style="top:134px"><svg class="bi" viewBox="0 0 17 17"><rect x="1.500" y="1.500" width="14" height="14" fill="none" stroke="#333" stroke-width="0.900" stroke-dasharray="1 1"/><rect x="3.500" y="3.500" width="10" height="10" fill="#5a8fce"/></svg><span class="lbl">SAP HANA</span></div>
<div class="row" style="top:153px"><svg class="bi" viewBox="0 0 17 17"><path d="M1.500 1.500C6 2.500 12 4.500 16 9C13 9.500 11 10.500 9.500 12C7 13.500 4 14.500 1.500 15.500C4 11 4 6 1.500 1.500Z" fill="#5b84b8" stroke="#2f5a94" stroke-width="0.700"/><path d="M5 3C7 6.500 7 10.500 5 14M8.500 4.500C10 7 10 10 8.500 12.500" stroke="#dfe8f5" stroke-width="0.800" fill="none"/></svg><span class="lbl">MSSQL</span></div>
<div class="row" style="top:172px"><svg class="bi" viewBox="0 0 17 17"><circle cx="8.500" cy="8.500" r="7.200" fill="#eef3fa" stroke="#555" stroke-width="0.900"/><path d="M4 5c1.500-1.500 3.500-2 5-1s.5 2.500-1 3S4.500 8.500 4 7ZM10 8c1.500-.5 3.500 0 3.500 1.500S12 12.500 10.500 12 9.500 9 10 8ZM5.500 10.500c1 0 2 1 1.500 2.500s-2 .5-2.500-.5Z" fill="#4a78b5"/></svg><span class="lbl">WMS/WMTS</span></div>
<div class="row" style="top:191px"><svg class="bi" viewBox="0 0 17 17"><rect x="2" y="2" width="13" height="13" fill="#3a4a5a"/><path d="M2 6.300H15M2 10.600H15M6.300 2V15M10.600 2V15" stroke="#fff" stroke-width="1.100"/></svg><span class="lbl">Vector Tiles</span></div>
<div class="row" style="top:210px"><div class="arrow"></div><svg class="bi" viewBox="0 0 17 17"><g fill="#6a9bd1"><rect x="1.500" y="1.500" width="4" height="4"/><rect x="6.500" y="1.500" width="4" height="4"/><rect x="11.500" y="1.500" width="4" height="4"/><rect x="1.500" y="6.500" width="4" height="4"/><rect x="6.500" y="6.500" width="4" height="4"/><rect x="11.500" y="6.500" width="4" height="4"/><rect x="1.500" y="11.500" width="4" height="4"/><rect x="6.500" y="11.500" width="4" height="4"/><rect x="11.500" y="11.500" width="4" height="4"/></g></svg><span class="lbl">XYZ Tiles</span></div>
<div class="row" style="top:229px"><svg class="bi" viewBox="0 0 17 17"><circle cx="8.500" cy="8.500" r="7.200" fill="#5b84b8" stroke="#2b3f5c" stroke-width="1"/><path d="M1.500 8.500H15.500M3 5H14M3 12H14" stroke="#eef3fa" stroke-width="1.100"/><ellipse cx="8.500" cy="8.500" rx="3.200" ry="7.200" fill="none" stroke="#eef3fa" stroke-width="1"/></svg><span class="lbl">WCS</span></div>
<div class="row" style="top:248px"><div class="arrow"></div><svg class="bi" viewBox="0 0 17 17"><circle cx="8.500" cy="8.500" r="7.200" fill="#f2f6fb" stroke="#555" stroke-width="0.900"/><path d="M4.500 4.500L8 13L11.500 4.500H13" stroke="#3d6da3" stroke-width="1" fill="none"/><path d="M2 6.500C5 8 12 8 15 6.500M2.500 11.500C5 10 12 10 14.500 11.500" stroke="#9bb6d8" stroke-width="0.600" fill="none"/></svg><span class="lbl">WFS / OGC API - Features</span></div>
<div class="row" style="top:267px"><svg class="bi" viewBox="0 0 17 17"><circle cx="8.500" cy="8.500" r="7.200" fill="#f2f6fb" stroke="#666" stroke-width="0.900"/><path d="M3.500 5.500c1.500-2 4-2.500 5-1.500s-1 2.500-2.500 3-3 .5-2.500-1.500ZM9.500 9c1.500-.5 3.500 0 3.500 1.500s-2 2.500-3 2-1-3-.5-3.500Z" fill="#5b84b8"/><path d="M3 14L14 3" stroke="#666" stroke-width="0.700"/></svg><span class="lbl">ArcGIS REST Servers</span></div>
<div class="row" style="top:286px"><svg class="bi" viewBox="0 0 17 17"><g stroke="#4a78b5" stroke-width="2.200" stroke-linecap="round"><path d="M8.500 1.800V15.200M2.700 5.100L14.300 11.900M14.300 5.100L2.700 11.900"/></g><circle cx="8.500" cy="8.500" r="1.600" fill="#fff"/></svg><span class="lbl">GeoNode</span></div>
</div>
<div class="abs" style="left:127px;top:721px;width:16px;height:1px;background-image:linear-gradient(90deg,#c4c4c4 1px,transparent 1px);background-size:3px 1px"></div>
<div class="dock-title" style="left:4px;top:726px">Layers</div>
<svg class="abs" style="left:241px;top:729px" width="26" height="12" viewBox="0 0 26 12"><rect x="0.500" y="0.500" width="10" height="10" rx="2.200" fill="none" stroke="#6b6763" stroke-width="1"/><rect x="4.500" y="2.500" width="4" height="4" rx="1" fill="none" stroke="#6b6763" stroke-width="1"/><rect x="2.500" y="4.500" width="4" height="4" rx="1" fill="#efefef" stroke="#6b6763" stroke-width="1"/><rect x="14.500" y="0.500" width="10" height="10" rx="2.200" fill="none" stroke="#6b6763" stroke-width="1"/><path d="M17 3L22 8M22 3L17 8" stroke="#5e5a55" stroke-width="1.900"/></svg>
<svg class="abs" style="left:8px;top:751.5px" width="16" height="16" viewBox="0 0 16 16"><path d="M1 8L6 4L9 7L7 12Z" fill="#e8443a"/><path d="M2 6L6 3L8 5L5 9Z" fill="#f0c030"/><path d="M1.500 9L5 6.500L7 9L4.500 12Z" fill="#4a86cf" opacity=".8"/><path d="M6.500 9.500L13.500 2L15 3.500L8.500 11.500Z" fill="#c08a3e" stroke="#7a5520" stroke-width="0.500"/><path d="M5.500 10L8.500 12.500L7 14L4 12Z" fill="#e8d08a" stroke="#7a5520" stroke-width="0.500"/></svg>
<svg class="abs" style="left:33px;top:751.5px" width="16" height="16" viewBox="0 0 16 16"><path d="M5 3V1.500H9V3M4 5V3H10V12" stroke="#777" stroke-width="0.900" fill="none"/><rect x="2" y="5" width="7" height="9" fill="#eee" stroke="#777" stroke-width="0.900"/><circle cx="11.500" cy="12.500" r="3" fill="#7db97d" stroke="#4a8a4a" stroke-width="0.800"/></svg>
<svg class="abs" style="left:59px;top:751.5px" width="16" height="16" viewBox="0 0 16 16"><path d="M0.500 7.500C4 2.500 10 2.500 14 7.500C10 12 4 12 0.500 7.500Z" fill="#f4f4f4" stroke="#888" stroke-width="0.900"/><circle cx="7.200" cy="7.200" r="3.200" fill="#5a8fce"/><circle cx="7.200" cy="7.200" r="1.300" fill="#123"/><path d="M11.500 13H15.500L13.500 15.500Z" fill="#555"/></svg>
<svg class="abs" style="left:84.5px;top:751.5px" width="16" height="16" viewBox="0 0 16 16"><path d="M0.500 2.500H13.500L9 8V14.500L5.500 13V8Z" fill="#5a8fce" stroke="#3d6da3" stroke-width="0.600"/><rect x="0.500" y="1" width="13" height="2.500" fill="#f5dc4a" stroke="#d3b820" stroke-width="0.500"/><path d="M11.500 13H15.500L13.500 15.500Z" fill="#555"/></svg>
<svg class="abs" style="left:109px;top:751.5px" width="16" height="16" viewBox="0 0 16 16"><text x="0" y="10" font-family="Liberation Serif,serif" font-size="14" fill="#7a2a7a">ε</text><path d="M7.500 9.500H14.500L12.500 12V15.500H9.500V12Z" fill="#d5d5d5" stroke="#999" stroke-width="0.500"/></svg>
<svg class="abs" style="left:145.5px;top:751.5px" width="16" height="16" viewBox="0 0 16 16"><path d="M2.500 2V14M2.500 4.500H5M2.500 12H5" stroke="#777" stroke-width="0.900" fill="none"/><rect x="4.500" y="3" width="3" height="3" fill="#f5a623"/><rect x="4.500" y="10.500" width="3" height="3" fill="#f5a623"/><path d="M11.500 15L15.500 9.500H13V1H10V9.500H7.500Z" fill="#5a8fce" stroke="#2f5a94" stroke-width="0.700"/></svg>
<svg class="abs" style="left:170.5px;top:751.5px" width="16" height="16" viewBox="0 0 16 16"><path d="M2.500 2V14M2.500 4.500H5M2.500 12H5" stroke="#777" stroke-width="0.900" fill="none"/><rect x="4.500" y="3" width="3" height="3" fill="#f5a623"/><rect x="4.500" y="10.500" width="3" height="3" fill="#f5a623"/><path d="M11.500 1L15.500 6.500H13V15H10V6.500H7.500Z" fill="#5a8fce" stroke="#2f5a94" stroke-width="0.700"/></svg>
<svg class="abs" style="left:195.5px;top:751.5px" width="16" height="16" viewBox="0 0 16 16"><rect x="1.500" y="1.500" width="11" height="11" fill="#fff" stroke="#666" stroke-width="1"/><rect x="9" y="10.500" width="6.500" height="4" rx="1.200" fill="#e8283a"/><path d="M10.500 12.500H14" stroke="#fff" stroke-width="1"/></svg>
<div class="dd" style="left:130px;top:758px"></div>
<div class="tree" style="left:0px;top:775px;width:268px;height:227px"></div>
<div class="abs" style="left:1px;top:776px;width:266px;height:19px;background:linear-gradient(#3a90cc,#2f86c2)"></div>
<svg class="abs" style="left:24.5px;top:779px" width="13" height="13" viewBox="0 0 13 13"><rect x="0.500" y="0.500" width="12" height="12" fill="#fff" stroke="#b5b5b5" stroke-width="1"/><path d="M3 6.500L5.500 9.800L10 2.800" stroke="#111" stroke-width="1.600" fill="none"/></svg>
<svg class="abs" style="left:48px;top:781px" width="9" height="9"><circle cx="4.500" cy="4.500" r="3" fill="#a4579b" stroke="#c7a3d8" stroke-width="0.800"/></svg>
<div class="abs" style="left:66px;top:777px;font-weight:bold;font-size:12.700px;line-height:17px;color:#fff;text-decoration:underline;text-underline-offset:2px;white-space:nowrap">rdf_fdw:museums_brittany</div>
<svg class="abs" style="left:24.5px;top:798px" width="13" height="13" viewBox="0 0 13 13"><rect x="0.500" y="0.500" width="12" height="12" fill="#fff" stroke="#b5b5b5" stroke-width="1"/><path d="M3 6.500L5.500 9.800L10 2.800" stroke="#111" stroke-width="1.600" fill="none"/></svg>
<div class="abs" style="left:44px;top:796px;width:16px;height:16px;background:#6cbd6b;border:1px solid #5aa85a"></div>
<div class="abs" style="left:66px;top:796px;font-weight:bold;font-size:12.900px;line-height:17px;white-space:nowrap">gadm41_FRA_2</div>
<svg class="abs" style="left:275px;top:138px" width="1360" height="863" viewBox="285 146 1360 863">
<rect x="285" y="146" width="1360" height="863" fill="#fff"/>
<defs><filter id="rough" x="285" y="146" width="1360" height="863" filterUnits="userSpaceOnUse"><feTurbulence type="fractalNoise" baseFrequency="0.22" numOctaves="2" seed="7" result="n"/><feDisplacementMap in="SourceGraphic" in2="n" scale="2.2" xChannelSelector="R" yChannelSelector="G"/></filter></defs>
<g fill="#6cbd6b" stroke="#3f7f3f" stroke-width="0.8" stroke-linejoin="round" filter="url(#rough)">
<path d="M1398.1 146L1398.6 156.9L1402.2 166.1L1410.7 166.6L1425.2 176.3L1436.1 183.5L1446.9 196.8L1456.6 210.1L1465.1 219.8L1469.9 222.2L1472.3 236.7L1472.3 246.3L1468.2 256L1468.7 265.7L1473.5 280.2L1478.8 288.6L1483.2 282.6L1484.4 294.7L1483.2 309.2L1482 323.7L1477.1 338.2L1467.5 342.5L1478.4 346.6L1479.6 347.3L1480.8 364.2L1483.2 373.8L1495.3 381.1L1502.5 392L1512.2 398L1524.3 403.3L1532.7 403.3L1533.9 397.5L1536.4 404L1548.4 405.7L1533.9 406.5L1509.8 405.3L1497.7 407.2L1488 410.1L1473.5 405.7L1463.9 408.9L1449.4 413.7L1434.9 416.9L1410.7 416.1L1391.3 412.5L1384.1 405.3L1387.7 396.8L1397.4 393.2L1392.6 389.5L1395 382.3L1386.5 385.9L1372 388.3L1357.5 387.1L1344.2 394.4L1337 400.4L1328.5 404L1329.6 399.8L1327.7 405.2L1320.5 406.1L1309.6 406.1L1298.8 407L1289.7 408.5L1293.3 411.6L1291.5 414.3L1286.1 417.9L1285.2 425.1L1281.5 425.1L1280.6 418.8L1277 417.9L1277.9 424.2L1272.5 427L1268 417.9L1262.5 412.5L1262.5 409.7L1257.1 405.2L1248 407.9L1238.1 415.2L1234.4 412.5L1242.6 403.4L1247.1 398L1239 396.2L1237.2 391.3L1232.6 393.4L1226.3 397.6L1215.4 401.6L1204.6 405.2L1190.1 403.4L1181 405.2L1186.4 408.5L1184.6 412.5L1175.6 417L1164.7 419.7L1157.4 418.3L1160.2 420.6L1157.4 422.4L1146.6 430.6L1133.9 439.3L1132.1 444.2L1123 440.5L1117.6 441.4L1118.5 446.9L1116.7 450.9L1108.5 444.2L1104.9 438.7L1106.7 434.2L1092.2 430.6L1083.2 425.1L1073.2 419.7L1074 412.3L1071.3 403.3L1062.2 396.9L1053.2 394.2L1047.7 387.9L1038.7 383.3L1032.3 378.8L1036.9 369.7L1032.3 367L1030.5 360.7L1028.7 365.2L1016.9 365.2L1007.9 362.5L1000.6 358.9L1006.1 356.2L1012.4 352.5L1011.5 347.5L1004.3 348L995.2 346.2L988.9 347.1L986.1 341.7L988 334.4L992.5 329L998.8 322.6L990.7 325.4L984.3 330.8L975.3 332.6L964.4 334.4L955.3 338.9L948.1 344.9L944.5 340.8L942.7 332.6L939 330.8L931.8 336.2L926.4 341.7L919.1 338L910.1 338.9L902.8 343.1L895.6 346.2L887.4 347.5L885.6 352.5L879.3 353.4L871.1 354L873.8 347.1L864.8 348L857.5 342L850.3 344.4L844.8 341.3L837.6 343.5L830.3 348L821.3 352.5L813.1 353.4L813.1 360.7L818.6 364.3L823.1 361.6L824 367L832.2 367.9L833.1 372.5L838.5 376.1L828.5 377L822.2 379.8L824 387L827.7 392.5L822.2 396.1L815 394.3L807.7 391.6L801.4 392.5L804.1 387.4L796.9 388.8L786 389.7L778.8 385.2L767.9 383.4L757 385.2L748 381.6L740.7 382.5L734.4 388.8L735.3 396.1L730.7 394.3L732.6 399.7L737.1 409.7L735.3 412.4L726.2 405.1L719 400.6L721.7 397L713.5 394.3L710.8 388.8L709.9 397.9L702.7 406.1L700.9 394.3L695.4 388.8L697.2 381.6L693.6 378L688.2 377.1L682.7 380.7L673.7 381.6L668.2 386.1L661 385.2L648.3 387.9L635.6 388.8L624.8 392.5L615.7 400.6L608.5 402.4L595.8 403.3L587.6 407L586.7 402.4L590.3 397.9L579.5 394.6L568.6 394.3L554.1 397.9L543.2 400.6L543.2 405.1L536 408.8L526.8 409L515.9 408.1L501.4 409.9L497.8 415.4L488.8 419L487 424.4L477.9 426.2L468.8 426.2L458 428.9L448.9 433.5L439.9 439.8L432.6 444.3L431.7 451.6L435.3 457L438.9 462.5L430.8 469.7L426.3 478.8L431.7 484.2L436.2 491.4L437.1 495.1L429.9 496L433.5 500.5L434.4 507.8L445.3 508.7L458 505L459.8 501.4L472.5 498.7L485.1 500.5L496 503.2L508.7 498.7L517.8 495.1L526.8 493.3L537.7 490.5L548.6 486.9L557.6 487.8L570.3 482.4L583 478.8L590.2 477L581.2 480.6L568.5 486L559.4 491.4L552.2 496L544.9 502.3L537.7 509.6L546.7 507.8L552.2 510.5L563 509.6L570.3 505.9L581.2 505.9L583 508.7L575.7 513.2L584.8 514.1L595.7 513.2L604.7 516.8L621.9 519L608.3 520.8L592 519.5L581.2 521.3L573.9 525L563 524.1L552.2 525L550.4 520.4L537.7 520.4L526.8 523.2L521.4 524.1L519.6 519.5L525 515L515.9 516.8L508.7 515.9L510.5 511.4L508.7 504.5L503.3 505.9L496.9 510.5L498.7 516.8L501.4 522.2L494.2 525L487 523.2L481.5 525L485.1 529.5L482.4 533.1L488.8 534.9L499.6 534.9L503.3 540.4L504.2 547.6L505.1 554.9L503.3 561.2L509.6 560.3L511.4 553.9L517.8 549.4L523.2 545.8L530.4 544L537.7 541.3L550.4 542.2L559.4 544.9L566.7 549.4L577.5 551.2L586.6 554.9L592 562.1L591.1 564.5L597.5 567.2L594.7 572.7L581.2 582.6L576.6 585.4L566.7 579.9L554 581.4L541.3 583.6L526.8 587.2L512.3 587.2L497.8 589.9L485.1 592.6L468.8 593.5L452.5 595.3L454.3 599.9L444.4 603.1L452.5 605.3L461.6 607.1L472.5 608.9L485.1 608.9L492.4 613.4L501.4 615.3L506.9 612.5L515.9 613.4L526.8 618L537.7 625.2L550.4 632.5L557.6 639.7L563 647L566.7 654.2L570.3 663.3L571.2 670.5L567.6 675.9L560.3 677.8L564.9 680.5L559.4 684.1L568.5 683.2L579.3 682.3L590.2 684.1L599.3 683.2L610.1 684.1L621.9 684.1L628.3 679.6L633.7 673.2L631.9 666.9L635.5 664.2L644.6 661.4L651.8 659.6L660.9 660.5L671.7 664.2L682.6 664.2L694.4 663.3L691.7 657.8L693.5 654.2L696.3 653.4L705.4 656.2L712.6 659.8L721.7 666.1L727.1 672.5L732.5 677.9L734.3 684.2L741.6 683.3L752.5 685.1L763.3 681.5L774.2 681.5L781.4 685.1L792.3 689.7L803.2 689.7L814.1 691.5L824.9 692.4L835.8 694.2L841.2 692.4L846.7 698.7L852.1 706L859.3 711.4L864.8 715L872 714.1L881.1 711.4L890.1 708.7L897.4 715.9L904.6 712.3L915.5 714.1L924.6 720.5L933.6 726.8L941.7 732.5L949 739.7L956.2 744.2L963.5 750.6L967.1 757.8L966.2 765.1L962.6 770.5L964.4 777.8L968 786.8L978 787.7L992.5 790.4L983.4 785L976.2 777.8L972.5 770.5L970.7 763.3L974.3 757.8L971.6 748.8L979.8 752.4L988.8 755.1L997.9 754.2L1007 755.1L1005.1 747L1010.6 756L1017.8 758.7L1015.1 750.6L1021.4 756.9L1028.7 759.6L1035.9 761.4L1041.4 764.2L1046.8 766.9L1054.1 768.7L1059.5 772.3L1063.1 778.7L1070.4 782.3L1081.2 784.1L1090.3 781.4L1101.2 777.8L1112 780.5L1119.3 781.4L1124.7 775L1133.8 774.1L1142.8 770.5L1151.9 765.1L1144.6 772.3L1153.7 775L1164.6 772.3L1173.6 772.3L1182.7 775L1193.6 778.7L1191.7 783.2L1179.1 781.4L1177.2 786.8L1180.9 792.2L1177.2 795.9L1184.5 799.5L1193.6 797.7L1191.7 803.1L1197.2 804.9L1188.1 806.7L1179.1 810.4L1170 814L1165.3 816.1L1158 819.7L1165.3 824.2L1170.7 828.8L1175.3 832.4L1176.2 839.6L1172.5 845.1L1161.7 845.1L1162.6 848.7L1174.3 850.5L1183.4 854.1L1194.3 857.8L1203.3 858.7L1205.1 853.2L1214.2 852.3L1223.3 855L1228.7 859.6L1237.8 864.1L1245 865.9L1254.1 865L1259.5 860.5L1266.7 859.6L1274 855L1282.1 850.5L1290.3 846L1301.2 844.2L1315.7 843.3L1326.5 844.2L1326.5 848.7L1317.5 850.5L1304.8 851.4L1293.9 853.2L1285.8 855L1283.9 860.5L1281.2 866.8L1286.7 872.2L1288.5 877.7L1286.7 884.9L1283.9 890.4L1272.2 891.3L1264.9 895.8L1259.5 899.4L1268.6 902.1L1281.5 904.4L1294.2 907.1L1306.9 908.9L1319.6 911.6L1328.6 917.1L1337.7 922.5L1344 929.7L1345.8 933.4L1341.3 936.1L1332.2 939.7L1328.6 946.1L1325 954.2L1317.8 960.5L1308.7 966.9L1301.4 973.2L1297.8 977.8L1290.6 978.7L1292.4 986.8L1293.3 997.7L1297.8 1004.9L1305.1 1008.9L1305 1016L1652 1016L1652 157L1645.5 161L1636 166L1630 171L1623.4 170.2L1617 168L1610.8 167.8L1612 163L1616 160.5L1611 153L1604 145.5L1603 140L1398 140Z"/>
<path d="M312.6 466.5L321.1 461.6L325.9 458L336.8 456.8L342.8 461.6L350 464.1L345.2 467.7L335.6 468.9L328.3 472.5L319.9 473.7L322.3 468.9Z"/>
<path d="M400 601.7L405.4 602.2L410.9 603.1L414.1 605.3L410 606.2L407.2 604.4L401.8 603.5Z"/>
<path d="M673.7 371.6L679.1 368.9L686.4 369.3L690.9 372.5L687.3 374.3L680.9 372.5L676.4 374.3Z"/>
<path d="M1006.1 340.8L1009.7 335.3L1015.1 333.2L1020.6 333.5L1020.9 338.9L1016 342.6L1009.7 342.6Z"/>
<path d="M846.7 729.5L853.9 728.6L863 729.5L872 732.2L877.8 735.9L874.7 740.4L868.4 739.5L861.2 737.7L853.9 735L847.6 733.2Z"/>
<path d="M927.2 826.2L928.1 820.8L931.7 815.4L939.9 819L950.7 822.6L962.5 823.5L964.3 828.9L967.9 834.4L976.1 836.2L983.3 839.3L993.3 838.9L996 842.5L990.6 846.2L988.8 849.8L983.3 852L976.1 849.8L967 849.8L959.8 847.1L948.9 848L939.9 846.2L931.7 841.6L934.4 837.1L929.9 832.6Z"/>
<path d="M1013.2 812.6L1017.8 811.4L1026.8 814.5L1033.2 813.9L1029.5 817.2L1032.2 822.6L1026.8 817.2L1019.6 815.4Z"/>
<path d="M1049.5 830.8L1057.6 828.4L1059.8 831.7L1053.1 835.3L1049.5 834.4Z"/>
<path d="M1239.9 934.3L1248.9 933.4L1259.8 934.3L1268.8 939.7L1268.5 945.1L1264.3 947L1265.2 950.6L1276.1 954.2L1287 958.7L1292.4 964.2L1292.8 972.3L1290.9 978.1L1287 973.2L1283.3 966.9L1277.9 961.4L1270.7 956L1263.4 953.3L1256.2 956.9L1248.9 952.4L1241.7 946.1L1243.5 940.6Z"/>
<g stroke-width="0.4"><ellipse cx="354.9" cy="476.1" rx="2" ry="1.2" transform="rotate(-30 354.9 476.1)"/><ellipse cx="365.8" cy="479.3" rx="2.5" ry="1.2" transform="rotate(-20 365.8 479.3)"/><ellipse cx="374.5" cy="485.5" rx="3.5" ry="2" transform="rotate(-30 374.5 485.5)"/><ellipse cx="379" cy="493.5" rx="2" ry="1.5"/><ellipse cx="392" cy="492.5" rx="4" ry="1.5" transform="rotate(20 392 492.5)"/><ellipse cx="407" cy="502" rx="4.5" ry="1.2" transform="rotate(-30 407 502)"/><ellipse cx="1384.5" cy="327.5" rx="2" ry="1"/><ellipse cx="1392" cy="327" rx="1.5" ry="1.5"/><ellipse cx="1396" cy="328" rx="3" ry="3"/><ellipse cx="1401" cy="327" rx="2" ry="2.5"/><ellipse cx="1406" cy="327.5" rx="2" ry="2"/><ellipse cx="1416.5" cy="330.5" rx="1.5" ry="1"/><ellipse cx="1320" cy="298.3" rx="0.8" ry="0.8"/><ellipse cx="683" cy="707" rx="2" ry="1.5"/><ellipse cx="687.5" cy="711" rx="2.5" ry="2"/><ellipse cx="699.5" cy="708.5" rx="2" ry="1.5"/><ellipse cx="677" cy="689" rx="1.5" ry="0.8"/><ellipse cx="573.5" cy="689.5" rx="1.5" ry="0.8"/><ellipse cx="690" cy="703" rx="1.5" ry="1"/><ellipse cx="852" cy="328" rx="5" ry="1.5"/><ellipse cx="869" cy="322" rx="1.2" ry="1"/><ellipse cx="1006" cy="338" rx="2" ry="1.5"/><ellipse cx="1017" cy="342" rx="1.2" ry="1"/><ellipse cx="1084" cy="385" rx="1" ry="1"/><ellipse cx="1098" cy="367" rx="1" ry="1"/><ellipse cx="1137" cy="808" rx="1.5" ry="1"/><ellipse cx="1222.5" cy="929" rx="1.5" ry="0.8"/><ellipse cx="1018.5" cy="806" rx="2" ry="1"/><ellipse cx="1023" cy="826.5" rx="2" ry="1"/><ellipse cx="1007" cy="806.5" rx="1.5" ry="0.8"/><ellipse cx="1067.5" cy="836.5" rx="0.8" ry="0.8"/></g>
</g>
<g fill="#fff" stroke="#3f7f3f" stroke-width="0.5" stroke-linejoin="round" filter="url(#rough)">
<path d="M1028.5 738.1L1031.7 738.8L1030.7 743.2L1033.2 747.5L1035.4 749L1036.4 745.4L1037.9 750.4L1041.2 751.9L1043.3 750.4L1044.8 754.1L1049.9 752.6L1050.2 746.8L1056.4 746.1L1059.3 741L1065.1 741.7L1072.3 741L1078.8 739.6L1086.1 741L1089 738.5L1092.6 734.5L1094.1 738.1L1098 741L1095.5 743.2L1101.3 747.5L1107.1 750.4L1111.4 746.8L1114.3 744.3L1113.6 749L1108.6 751.9L1104.2 754.8L1102 759.1L1101.7 763.5L1097 765.7L1090.4 766.4L1086.8 763.5L1082.5 762.8L1078.1 764.9L1075.2 760.6L1071.6 763.5L1066.5 761.3L1062.2 766.4L1056.4 760.6L1050.6 759.1L1044.8 760.6L1041.2 762.8L1039 760.6L1034.6 757.7L1031 754.8L1026.3 750.4L1025.2 744.6Z"/>
<path d="M1178 833.3L1182.5 838.7L1187 836.9L1192.5 840.5L1197.9 845.1L1208.8 846.9L1199.7 848.7L1196.1 850.5L1188.8 849.6L1179.8 848.7L1174.3 846.9L1174.3 842.4L1178 839.6Z"/>
<path d="M1327 407L1331.3 409.1L1334.6 413.5L1337.8 417.8L1341.1 422.2L1348.7 422.2L1353 424.3L1353.6 427.1L1348.7 424.9L1345.4 425.4L1348.7 430.9L1353 435.2L1350.9 439.6L1346.5 436.3L1342.2 432L1338.9 428.7L1337.8 424.3L1334.6 421.1L1331.3 416.7L1330.2 412.4L1325.9 409.7Z" stroke-width="0.3"/>
<path d="M944.6 731.3L943.5 724.8L946.4 719.7L950 714.6L955.8 713.2L958 711L957.2 707.4L961.6 704.5L964.5 700.1L965.9 699.4L965.2 703.8L963 708.1L965.2 708.1L971 706.3L972.1 707.4L968.1 709.9L964.5 711.7L963 714.6L960.1 719L955.8 718.6L952.2 717.5L949.3 721.2L946.4 724.8L947.1 729.1Z" stroke-width="0.3"/>
<path d="M897.1 711.7L906.5 713L914.5 714.5L921.2 717.4L914.5 716.2L907.2 714.6L900 714.2L897.1 713.6Z" stroke-width="0.3"/>
<path d="M907.6 698L910.9 694.7L914.1 693.3L913.4 695.8L910.1 698.3Z" stroke-width="0.3"/>
</g>
<g fill="#6cbd6b" stroke="#3f7f3f" stroke-width="0.4">
<path d="M1060 757.7L1060.7 751.2L1063.6 746.8L1067.2 744.6L1065.1 749L1062.9 751.9L1062.2 756.2L1060.7 759.1Z"/>
<path d="M1075.2 749L1079.6 746.8L1082.5 745.4L1085.4 748.3L1087.5 750.4L1082.5 749L1079.6 750.4L1076.7 753.3L1074.5 752.6Z"/>
<path d="M1081.4 753.3L1083.6 754.1L1083.9 757L1081.7 757.7L1080.7 755.5Z"/>
<path d="M1056.4 753L1058.2 753.3L1057.5 754.8L1056 754.4Z"/>
<path d="M1089.7 743.2L1093.3 742.8L1094.4 744.6L1090.4 745Z"/>
<path d="M1077 743.2L1079.2 743.6L1078.5 745L1076.7 744.6Z"/>
<path d="M1099.5 752.2L1103.5 753L1104.2 754.8L1100.6 754.1Z"/>
<path d="M1076.7 757.7L1078.5 758L1077.8 759.9L1076.3 759.5Z"/>
<path d="M1046.2 754.4L1048 754.8L1047.7 756.2L1046.1 755.9Z"/>
<path d="M1062.9 759.5L1065.1 759.9L1064.3 761.7L1062.8 761.2Z"/>
</g>
<g fill="none" stroke="#fff" stroke-opacity="0.8" stroke-linecap="round" stroke-linejoin="round">
<path d="M1028.7 739.7L1026 735.2L1022.4 729.7" stroke-width="0.84"/>
<path d="M1026.9 735.2L1032.3 730.7L1037.8 727.9" stroke-width="0.84"/>
<path d="M1093.9 741.5L1088.5 737L1083 734.3" stroke-width="0.98"/>
<path d="M1132 778.7L1138.3 773.2L1146.4 768.7L1152.2 765.1" stroke-width="1.26"/>
<path d="M631 668.7L627.9 662.4L625.5 658.7" stroke-width="0.91"/>
<path d="M588.4 477.9L595.7 475.5L602.9 473" stroke-width="0.56"/>
<path d="M595.7 515L594.7 523.2L601.1 528.6L608.3 533.1L615.6 534.9" stroke-width="0.98"/>
<path d="M615.6 534.9L628.3 534.9L640 537.6" stroke-width="0.56"/>
<path d="M497.8 417.2L508.7 419.9L519.6 424.4L528.6 428.4" stroke-width="0.35"/>
<path d="M487 425.3L494.2 432.6L505.1 433.5L514.1 434.4" stroke-width="0.35"/>
<path d="M702.7 405.1L701.8 397.9L699 392.5" stroke-width="0.70"/>
</g>
<g fill="none" stroke="#3f7f3f" stroke-width="0.9" stroke-linejoin="round" filter="url(#rough)">
<path d="M803.2 394.2L796.8 402.4L799.6 410.5L805 421.4L817.7 425L822.2 428.6L818.6 433.2L828.5 435.9L836.7 439.9L826.7 446.7L816.8 454.9L816.8 461.2L823.1 464.9L833.1 469.4L819.5 476.6L815.9 490L819.3 476.2L815.6 487.7L831.3 491.3L831.3 501.9L835.9 512.5L843.4 511L834.4 520L843.4 527.6L832.9 538.1L832.9 545.7L843.4 550.2L829.8 554.7"/>
<path d="M829.8 554.7L805.7 560.8L783 566.8L774 580.4L786.1 584.9L784.5 594L793.6 600L804.2 618.1L814.7 621.2L832.9 619.6L847.9 622.7L860 633.2L867.6 628.7L878.1 624.8L885.7 630.2L884.2 640.8L879.6 648.3L881.2 657.4L867.6 661.9L860 669.5L847.9 672.5L841.9 664.9L837.4 671L843.4 680L840.4 690.6"/>
<path d="M829.8 554.7L851 556.2L867.6 555.3L875.1 560.8L876.6 566.8L896.3 560.8L908.3 565.3L923.4 568.3L941.5 566.8L953.6 562.3L968.7 560.8L971.7 551.7L986.8 547.2L1008 551.7L1014 563.2L1032.1 559.3L1047.2 560.8L1062.3 568.3L1080.4 572.9L1088 586.4L1095.5 578.9L1116.7 575.9L1127.2 575.9L1127.2 587.9L1121.2 597L1127.2 604.6L1143.8 603L1162 591L1172.5 575.9L1166.5 565.3L1183.1 562.3L1200 559.3L1207.6 563.2L1222 577.5L1232.3 571.4L1248.7 571.4L1256 568.4L1265.7 562.4L1266.9 547.9L1277.8 545.4L1280.2 535.8L1294.7 530.9L1304.3 533.4L1306.8 527.3L1321.3 520.1L1333.3 523.7L1345.4 518.9L1355.1 514L1352.7 505.6L1362.3 501.9L1358.7 497.1L1363.6 486.2L1356.3 474.1L1362.3 465.7L1370.8 458.4L1369.6 446.3L1362.3 435.5L1350.3 439.1L1338.2 431.8L1324.9 437.9L1314 429.4L1299.5 419.8L1289.8 408.9"/>
<path d="M1248.1 571.5L1255.6 579.6L1260.2 593.2L1266.2 590.2L1282.8 588.7L1284.3 596.2L1261.7 599.3L1249.6 608.3L1246.6 617.4L1270.7 615.9L1288.9 621.9L1303.9 631L1314.5 641.5L1303.9 650.6L1307 662.7L1323.6 659.6L1328.1 670.2L1314.5 677.8L1310 688.3L1299.4 692.9L1320.6 698.9L1319 701.9L1300.9 706.4L1299.4 714L1307 729.1L1313 732.1"/>
<path d="M1313 732.1L1311.5 738.1L1307 747.2L1308.5 756.3L1307 766.8L1290.4 771.4L1288.9 780.4L1279.8 781.9L1276.8 775.9L1258.7 778.9L1243.6 775L1237.5 786.4L1225.4 792.5L1210.3 794L1201.3 788L1192.2 794L1190.7 798.5"/>
<path d="M1313 732.1L1325.1 724.6L1349.2 717L1353.8 723L1367.4 717L1385.5 711L1415.7 714L1430.8 714L1436.8 709.5L1453.4 709.5L1459.4 701.9L1464 692.9L1482.1 686.8L1500.2 680.8L1512.3 677.8L1510.8 670.2L1539.5 672.3L1548.5 680.8L1572.7 685.3L1587.8 688.3"/>
<path d="M1587.8 688.3L1592.3 676.2L1596.8 664.2L1605.9 656.6L1608.9 644.5L1614.9 635.5L1618 624.9L1630 620.4L1646.6 620.4"/>
<path d="M1589.3 679.3L1608.9 683.8L1627 688.3L1646.6 689.8"/>
<path d="M1587.8 688.3L1584.7 700.4L1599.8 704.9L1611.9 717L1608.9 724.6L1616.4 735.1L1630 741.2L1646.6 744.2"/>
<path d="M1646.6 756.3L1610.4 756.3L1616.4 765.3L1611.9 771.4L1627 775.9L1646.6 777.4"/>
<path d="M1646.6 821.2L1608.9 825.7L1572.7 833.2L1553 842.3L1575.7 846.8L1578.7 855.9L1590.8 863.4L1607.4 861.9L1608.9 876.7L1614.7 884.3L1600.3 898.7L1590 908.9L1581.8 917.2L1569.4 921.3L1548.9 929.5L1546.8 950.1L1534.5 960.3L1516 966.5L1511.9 950.1L1511.9 933.6L1500 933.4L1489.9 936.1L1486.2 948.8L1491.7 957.8L1497.1 963.3L1489.9 967.8L1495.3 973.2L1500 975.9"/>
<path d="M1581.8 917.2L1600.3 923.3L1627 932.8L1645.1 938.6"/>
<path d="M1345.8 933.4L1352.2 936.1L1359.4 944.2L1367.6 946.1L1370.3 952.4L1379.3 957.8L1395.7 958.7L1397.5 965.1L1410.1 966.9L1422.8 966L1427.4 972.3L1429.2 978.7L1439.1 979.6L1450.9 984.1L1462.7 985L1475.4 986.8L1488 988.6L1500 983.2"/>
<path d="M1488 410.1L1491.6 419.8L1497.7 429.4L1494.1 436.7L1504.9 446.3L1509.8 456L1521.9 458.4L1526.7 464.5L1541.2 465.7L1555.7 459.6L1560.5 452.4L1577.5 447.6L1581.1 440.3L1594.4 439.1L1611.3 445.1L1628.2 446.3L1645.6 450"/>
<path d="M1645.6 450L1642.2 456L1645.6 462.1"/>
<path d="M1645.6 468.1L1640.3 475.3L1642.7 485L1645.6 494.7"/>
<path d="M1645.6 516.4L1637.9 523.7L1635.5 533.4L1640.3 545.4L1645.6 557.5"/>
<path d="M1629.4 173.8L1622.2 188.3L1625.8 199.2L1645.6 212.5"/>
<path d="M1645.6 328.5L1637.9 328.5L1616.1 344.2L1635.5 352.7L1637.9 358.7L1645.6 361.9"/>
<path d="M1616.1 342.4L1625.8 349.7L1635.5 354.5L1645.6 361.8"/>
</g>
<g fill="#e5508f" stroke="#232323" stroke-width="0.8">
<circle cx="744" cy="426.9" r="3.700"/>
<circle cx="684.9" cy="480" r="3.700"/>
<circle cx="525.9" cy="489.6" r="3.700"/>
<circle cx="600.2" cy="520.4" r="3.700"/>
<circle cx="612" cy="535.8" r="3.700"/>
<circle cx="577" cy="584.8" r="3.700"/>
<circle cx="653.1" cy="617.1" r="3.700"/>
<circle cx="613.8" cy="659.6" r="3.700"/>
<circle cx="713" cy="658.9" r="3.700"/>
<circle cx="770" cy="662.9" r="3.700"/>
<circle cx="853" cy="605.8" r="3.700"/>
<circle cx="930.9" cy="673.8" r="3.700"/>
<circle cx="895" cy="710.9" r="3.700"/>
<circle cx="867" cy="732.8" r="3.700"/>
<circle cx="987.9" cy="751.8" r="3.700"/>
<circle cx="1015.1" cy="711.1" r="3.700"/>
<circle cx="1093" cy="727.9" r="3.700"/>
<circle cx="1199.9" cy="679.6" r="3.700"/>
<circle cx="1091.9" cy="447.8" r="3.700"/>
<circle cx="1171" cy="461.9" r="3.700"/>
<circle cx="1324.1" cy="466.8" r="3.700"/>
<circle cx="1332.8" cy="402.9" r="3.700"/>
<circle cx="1329" cy="573.7" r="3.700"/>
<circle cx="1446.9" cy="579.8" r="3.700"/>
<circle cx="1598.7" cy="574.9" r="3.700"/>
<circle cx="316.7" cy="466" r="3.700"/>
</g>
<g font-family="Liberation Sans,sans-serif" font-size="12.800" fill="#323232" fill-opacity="0.6">
<text x="643.3" y="535">Finistère</text>
<text x="1051.2" y="667.8">Morbihan</text>
<text x="1016.9" y="475.9">Côtes-d'Armor</text>
<text x="1393.8" y="562.8">Ille-et-Vilaine</text>
<text x="1529.1" y="294.2">Manche</text>
<text x="1395.4" y="829.6">Loire-Atlantique</text>
<text x="1442.8" y="973.8">Vendée</text>
<text x="1624.9" y="656">Mayenne</text>
<text x="1618" y="867.4">Maine-et-Loire</text>
<text x="1636.7" y="184.2">Calvados</text>
</g>
<g font-family="Liberation Sans,sans-serif" font-size="14.500" fill="#323232" stroke="#323232" stroke-width="0.22">
<text x="542.9" y="442.6" textLength="196" lengthAdjust="spacingAndGlyphs">musée des Beaux-Arts de Morlaix</text>
<text x="510.9" y="476.1" textLength="169.3" lengthAdjust="spacingAndGlyphs">écomusée des Monts d&#39;Arrée</text>
<text x="530.8" y="505.5" textLength="184.5" lengthAdjust="spacingAndGlyphs">musée des Beaux-Arts de Brest</text>
<text x="397.6" y="541.5" textLength="209.3" lengthAdjust="spacingAndGlyphs">musée de l&#39;école rurale en Bretagne</text>
<text x="581.7" y="582.6" textLength="160.5" lengthAdjust="spacingAndGlyphs">Port-musée de Douarnenez</text>
<text x="444.4" y="633" textLength="203.8" lengthAdjust="spacingAndGlyphs">musée des Beaux-Arts de Quimper</text>
<text x="560.3" y="655.4" textLength="203" lengthAdjust="spacingAndGlyphs">musée de la pêche de Concarneau</text>
<text x="512.7" y="674.7" textLength="96.5" lengthAdjust="spacingAndGlyphs">musée bigouden</text>
<text x="643.7" y="678.8" textLength="121.4" lengthAdjust="spacingAndGlyphs">musée de Pont-Aven</text>
<text x="857.9" y="603" textLength="101.1" lengthAdjust="spacingAndGlyphs">musée du Faouët</text>
<text x="935.4" y="670" textLength="112.9" lengthAdjust="spacingAndGlyphs">forges d&#39;Hennebont</text>
<text x="709.9" y="706.9" textLength="246" lengthAdjust="spacingAndGlyphs">musée national de la Marine de Port-Louis</text>
<text x="708" y="738.6" textLength="154" lengthAdjust="spacingAndGlyphs">écomusée de l&#39;île de Groix</text>
<text x="795.9" y="767.4" textLength="187.5" lengthAdjust="spacingAndGlyphs">musée de Préhistoire de Carnac</text>
<text x="1000.3" y="695.7" textLength="194.7" lengthAdjust="spacingAndGlyphs">musée de la Résistance bretonne</text>
<text x="1020" y="716.5" textLength="154.2" lengthAdjust="spacingAndGlyphs">écomusée de Saint-Dégan</text>
<text x="1098" y="744" textLength="255.2" lengthAdjust="spacingAndGlyphs">musée d&#39;histoire et d&#39;archéologie de Vannes</text>
<text x="852.6" y="445.5" textLength="234.6" lengthAdjust="spacingAndGlyphs">musée d&#39;Art et d&#39;Histoire de Saint-Brieuc</text>
<text x="1175.9" y="458.7" textLength="141.9" lengthAdjust="spacingAndGlyphs">musée Mathurin-Méheut</text>
<text x="1175.9" y="477.7" textLength="141.9" lengthAdjust="spacingAndGlyphs">musée Mathurin-Méheut</text>
<text x="1338.2" y="419" textLength="271.9" lengthAdjust="spacingAndGlyphs">musée d&#39;Histoire de la Ville et du Pays Malouin</text>
<text x="1481.3" y="571.5" textLength="156.1" lengthAdjust="spacingAndGlyphs">musée du château de Vitré</text>
<text x="1297.3" y="596.2" textLength="199.9" lengthAdjust="spacingAndGlyphs">musée des Beaux-Arts de Rennes</text>
<text x="313.1" y="462.4" text-anchor="end" transform="translate(313.1 0) scale(0.9 1) translate(-313.1 0)">musée des phares et balises</text>
</g>
</svg>
<div class="abs" style="left:274px;top:137px;width:1362px;height:865px;border:1px solid #b9b9b9;pointer-events:none"></div>
<div class="abs" style="left:0px;top:1002px;width:1636px;height:31px;background:#efefef"></div>
<div class="abs" style="left:4px;top:1005px;width:268px;height:24px;background:#fff;border:1px solid #b8b8b8;border-radius:3px"><svg class="abs" style="left:8px;top:5px" width="13" height="13" viewBox="0 0 13 13"><circle cx="5" cy="5" r="3.800" fill="none" stroke="#8a8a8a" stroke-width="1.200"/><path d="M7.800 7.800L12 12" stroke="#8a8a8a" stroke-width="1.500"/></svg><span class="abs" style="left:28px;top:3px;font-size:13.500px;line-height:17px;color:#7d7d7d;white-space:nowrap">Type to locate (Ctrl+K)</span></div>
<div class="sl" style="left:749px;top:1011px">Coordinate</div>
<div class="fld" style="left:813px;top:1006px;width:92px;text-align:center;padding:1px 0 0 0">-1,088 47,123</div>
<svg class="abs" style="left:909px;top:1009px" width="16" height="16" viewBox="0 0 16 16"><path d="M5 2.500L13 10.500L10.500 13L3 5Z" fill="none" stroke="#444" stroke-width="1"/><path d="M2 2L6 1.500M2 2L1.500 6M9 3.500C11 2 13.500 3 14 5M4.500 8L11 14.500M6 6.500L12 12.500" stroke="#444" stroke-width="1" fill="none"/></svg>
<div class="sl" style="left:938px;top:1011px">Scale</div>
<div class="fld" style="left:970px;top:1006px;width:97px">1:597991<div class="abs" style="right:0;top:0;width:20px;height:20px;border-left:1px solid #d0d0d0"></div><div class="abs" style="right:6px;top:8px;width:0;height:0;border-left:4px solid transparent;border-right:4px solid transparent;border-top:4.500px solid #555"></div></div>
<svg class="abs" style="left:1078px;top:1009px" width="13" height="15" viewBox="0 0 13 15"><path d="M3.500 7V4.500a3 3 0 0 1 6 0V7" fill="none" stroke="#777" stroke-width="1.600"/><rect x="1.500" y="6.500" width="10" height="7.500" rx="1" fill="#6e6e6e"/></svg>
<div class="sl" style="left:1100px;top:1011px">Magnifier</div>
<div class="fld" style="left:1156px;top:1006px;width:93px">100%<div class="abs" style="right:0;top:0;width:14px;height:20px;border-left:1px solid #d0d0d0"></div><div class="abs" style="right:3px;top:4px;width:0;height:0;border-left:4px solid transparent;border-right:4px solid transparent;border-bottom:4.500px solid #555"></div><div class="abs" style="right:3px;top:12px;width:0;height:0;border-left:4px solid transparent;border-right:4px solid transparent;border-top:4.500px solid #555"></div></div>
<div class="sl" style="left:1259px;top:1011px">Rotation</div>
<div class="fld" style="left:1316px;top:1006px;width:93px">0,0 °<div class="abs" style="right:0;top:0;width:14px;height:20px;border-left:1px solid #d0d0d0"></div><div class="abs" style="right:3px;top:4px;width:0;height:0;border-left:4px solid transparent;border-right:4px solid transparent;border-bottom:4.500px solid #555"></div><div class="abs" style="right:3px;top:12px;width:0;height:0;border-left:4px solid transparent;border-right:4px solid transparent;border-top:4.500px solid #555"></div></div>
<svg class="abs" style="left:1416.5px;top:1010.5px" width="13" height="13" viewBox="0 0 13 13"><rect x="0.500" y="0.500" width="12" height="12" fill="#fff" stroke="#b5b5b5" stroke-width="1"/><path d="M3 6.500L5.500 9.800L10 2.800" stroke="#111" stroke-width="1.600" fill="none"/></svg>
<div class="sl" style="left:1435.5px;top:1011px">Render</div>
<svg class="abs" style="left:1490px;top:1009px" width="16" height="16" viewBox="0 0 16 16"><circle cx="8" cy="8" r="6.300" fill="none" stroke="#777" stroke-width="1"/><ellipse cx="8" cy="8" rx="2.800" ry="6.300" fill="none" stroke="#777" stroke-width="0.900"/><path d="M1.700 8H14.300M2.500 5H13.500M2.500 11H13.500M0 8H16" stroke="#777" stroke-width="0.900"/></svg>
<div class="sl" style="left:1508.5px;top:1011px">EPSG:4326</div>
<svg class="abs" style="left:1589px;top:1010px" width="20" height="18" viewBox="0 0 20 18"><ellipse cx="9" cy="7.500" rx="8" ry="6.500" fill="#686868"/><path d="M10 12L16 16.500C13.500 16 12 15 10.500 13.500Z" fill="#686868"/></svg>
<svg class="abs" style="left:1622px;top:1019px" width="13" height="13" viewBox="0 0 13 13"><g fill="#b5b5b5"><circle cx="11" cy="2" r="0.700"/><circle cx="8" cy="5" r="0.700"/><circle cx="11" cy="5" r="0.700"/><circle cx="5" cy="8" r="0.700"/><circle cx="8" cy="8" r="0.700"/><circle cx="11" cy="8" r="0.700"/><circle cx="2" cy="11" r="0.700"/><circle cx="5" cy="11" r="0.700"/><circle cx="8" cy="11" r="0.700"/><circle cx="11" cy="11" r="0.700"/></g></svg>
</div>
</body>
</html>
